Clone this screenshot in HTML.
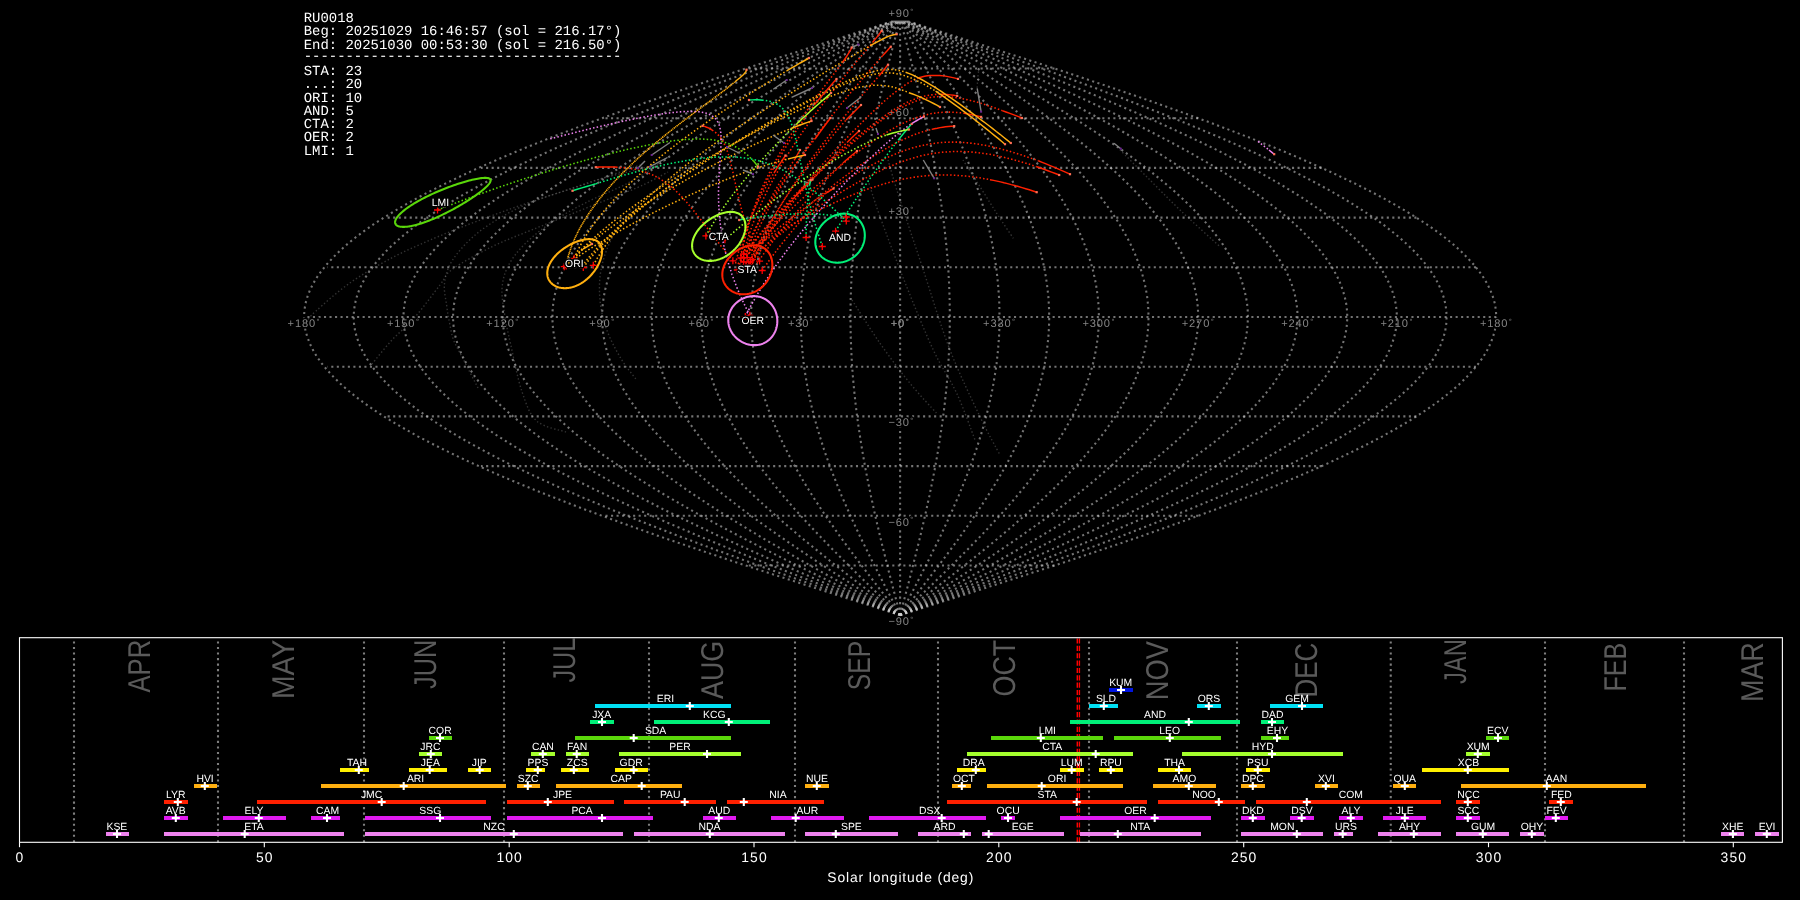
<!DOCTYPE html>
<html><head><meta charset="utf-8"><title>RU0018</title>
<style>html,body{margin:0;padding:0;background:#000;overflow:hidden}svg{display:block;will-change:transform}text{font-family:"Liberation Sans",sans-serif;text-rendering:geometricPrecision}.mono{font-family:"Liberation Mono",monospace}</style></head><body>
<svg width="1800" height="900" viewBox="0 0 1800 900">
<rect width="1800" height="900" fill="#000"/>
<g fill="none" stroke="#d2d2d2" stroke-opacity="0.55" stroke-width="2.08" stroke-dasharray="2.08 3.44">
<path d="M900.1,615.2 L921.0,608.5 L941.7,601.9 L962.5,595.3 L983.1,588.7 L1003.7,582.0 L1024.1,575.4 L1044.4,568.8 L1064.5,562.2 L1084.4,555.5 L1104.0,548.9 L1123.5,542.3 L1142.6,535.7 L1161.5,529.0 L1180.0,522.4 L1198.2,515.8 L1216.1,509.2 L1233.5,502.5 L1250.6,495.9 L1267.2,489.3 L1283.4,482.6 L1299.1,476.0 L1314.3,469.4 L1329.0,462.8 L1343.2,456.1 L1356.8,449.5 L1369.9,442.9 L1382.5,436.3 L1394.4,429.6 L1405.7,423.0 L1416.4,416.4 L1426.5,409.8 L1436.0,403.1 L1444.8,396.5 L1452.9,389.9 L1460.4,383.3 L1467.1,376.6 L1473.2,370.0 L1478.6,363.4 L1483.3,356.8 L1487.3,350.1 L1490.5,343.5 L1493.0,336.9 L1494.9,330.3 L1495.9,323.6 L1496.3,317.0 L1495.9,310.4 L1494.9,303.7 L1493.0,297.1 L1490.5,290.5 L1487.3,283.9 L1483.3,277.2 L1478.6,270.6 L1473.2,264.0 L1467.1,257.4 L1460.4,250.7 L1452.9,244.1 L1444.8,237.5 L1436.0,230.9 L1426.5,224.2 L1416.4,217.6 L1405.7,211.0 L1394.4,204.4 L1382.5,197.7 L1369.9,191.1 L1356.8,184.5 L1343.2,177.9 L1329.0,171.2 L1314.3,164.6 L1299.1,158.0 L1283.4,151.3 L1267.2,144.7 L1250.6,138.1 L1233.5,131.5 L1216.1,124.8 L1198.2,118.2 L1180.0,111.6 L1161.5,105.0 L1142.6,98.3 L1123.5,91.7 L1104.0,85.1 L1084.4,78.5 L1064.5,71.8 L1044.4,65.2 L1024.1,58.6 L1003.7,52.0 L983.1,45.3 L962.5,38.7 L941.7,32.1 L921.0,25.5 L910.6,22.1"/>
<path d="M900.1,615.2 L919.2,608.5 L938.3,601.9 L957.3,595.3 L976.2,588.7 L995.0,582.0 L1013.8,575.4 L1032.4,568.8 L1050.8,562.2 L1069.0,555.5 L1087.1,548.9 L1104.9,542.3 L1122.4,535.7 L1139.7,529.0 L1156.7,522.4 L1173.4,515.8 L1189.7,509.2 L1205.7,502.5 L1221.4,495.9 L1236.6,489.3 L1251.4,482.6 L1265.8,476.0 L1279.8,469.4 L1293.3,462.8 L1306.3,456.1 L1318.8,449.5 L1330.8,442.9 L1342.3,436.3 L1353.2,429.6 L1363.6,423.0 L1373.4,416.4 L1382.7,409.8 L1391.3,403.1 L1399.4,396.5 L1406.8,389.9 L1413.7,383.3 L1419.9,376.6 L1425.5,370.0 L1430.4,363.4 L1434.7,356.8 L1438.3,350.1 L1441.3,343.5 L1443.6,336.9 L1445.3,330.3 L1446.3,323.6 L1446.6,317.0 L1446.3,310.4 L1445.3,303.7 L1443.6,297.1 L1441.3,290.5 L1438.3,283.9 L1434.7,277.2 L1430.4,270.6 L1425.5,264.0 L1419.9,257.4 L1413.7,250.7 L1406.8,244.1 L1399.4,237.5 L1391.3,230.9 L1382.7,224.2 L1373.4,217.6 L1363.6,211.0 L1353.2,204.4 L1342.3,197.7 L1330.8,191.1 L1318.8,184.5 L1306.3,177.9 L1293.3,171.2 L1279.8,164.6 L1265.8,158.0 L1251.4,151.3 L1236.6,144.7 L1221.4,138.1 L1205.7,131.5 L1189.7,124.8 L1173.4,118.2 L1156.7,111.6 L1139.7,105.0 L1122.4,98.3 L1104.9,91.7 L1087.1,85.1 L1069.0,78.5 L1050.8,71.8 L1032.4,65.2 L1013.8,58.6 L995.0,52.0 L976.2,45.3 L957.3,38.7 L938.3,32.1 L919.2,25.5 L909.7,22.1"/>
<path d="M900.1,615.2 L917.5,608.5 L934.8,601.9 L952.1,595.3 L969.3,588.7 L986.4,582.0 L1003.4,575.4 L1020.3,568.8 L1037.1,562.2 L1053.7,555.5 L1070.1,548.9 L1086.3,542.3 L1102.2,535.7 L1117.9,529.0 L1133.4,522.4 L1148.5,515.8 L1163.4,509.2 L1178.0,502.5 L1192.2,495.9 L1206.0,489.3 L1219.5,482.6 L1232.6,476.0 L1245.3,469.4 L1257.5,462.8 L1269.3,456.1 L1280.7,449.5 L1291.6,442.9 L1302.1,436.3 L1312.0,429.6 L1321.5,423.0 L1330.4,416.4 L1338.8,409.8 L1346.7,403.1 L1354.0,396.5 L1360.8,389.9 L1367.0,383.3 L1372.6,376.6 L1377.7,370.0 L1382.2,363.4 L1386.1,356.8 L1389.4,350.1 L1392.1,343.5 L1394.2,336.9 L1395.7,330.3 L1396.6,323.6 L1396.9,317.0 L1396.6,310.4 L1395.7,303.7 L1394.2,297.1 L1392.1,290.5 L1389.4,283.9 L1386.1,277.2 L1382.2,270.6 L1377.7,264.0 L1372.6,257.4 L1367.0,250.7 L1360.8,244.1 L1354.0,237.5 L1346.7,230.9 L1338.8,224.2 L1330.4,217.6 L1321.5,211.0 L1312.0,204.4 L1302.1,197.7 L1291.6,191.1 L1280.7,184.5 L1269.3,177.9 L1257.5,171.2 L1245.3,164.6 L1232.6,158.0 L1219.5,151.3 L1206.0,144.7 L1192.2,138.1 L1178.0,131.5 L1163.4,124.8 L1148.5,118.2 L1133.4,111.6 L1117.9,105.0 L1102.2,98.3 L1086.3,91.7 L1070.1,85.1 L1053.7,78.5 L1037.1,71.8 L1020.3,65.2 L1003.4,58.6 L986.4,52.0 L969.3,45.3 L952.1,38.7 L934.8,32.1 L917.5,25.5 L908.8,22.1"/>
<path d="M900.1,615.2 L915.8,608.5 L931.3,601.9 L946.9,595.3 L962.4,588.7 L977.8,582.0 L993.1,575.4 L1008.3,568.8 L1023.4,562.2 L1038.3,555.5 L1053.1,548.9 L1067.6,542.3 L1082.0,535.7 L1096.2,529.0 L1110.1,522.4 L1123.7,515.8 L1137.1,509.2 L1150.2,502.5 L1163.0,495.9 L1175.4,489.3 L1187.6,482.6 L1199.3,476.0 L1210.7,469.4 L1221.8,462.8 L1232.4,456.1 L1242.7,449.5 L1252.5,442.9 L1261.9,436.3 L1270.8,429.6 L1279.3,423.0 L1287.4,416.4 L1294.9,409.8 L1302.0,403.1 L1308.6,396.5 L1314.7,389.9 L1320.3,383.3 L1325.4,376.6 L1329.9,370.0 L1334.0,363.4 L1337.5,356.8 L1340.5,350.1 L1342.9,343.5 L1344.8,336.9 L1346.2,330.3 L1347.0,323.6 L1347.3,317.0 L1347.0,310.4 L1346.2,303.7 L1344.8,297.1 L1342.9,290.5 L1340.5,283.9 L1337.5,277.2 L1334.0,270.6 L1329.9,264.0 L1325.4,257.4 L1320.3,250.7 L1314.7,244.1 L1308.6,237.5 L1302.0,230.9 L1294.9,224.2 L1287.4,217.6 L1279.3,211.0 L1270.8,204.4 L1261.9,197.7 L1252.5,191.1 L1242.7,184.5 L1232.4,177.9 L1221.8,171.2 L1210.7,164.6 L1199.3,158.0 L1187.6,151.3 L1175.4,144.7 L1163.0,138.1 L1150.2,131.5 L1137.1,124.8 L1123.7,118.2 L1110.1,111.6 L1096.2,105.0 L1082.0,98.3 L1067.6,91.7 L1053.1,85.1 L1038.3,78.5 L1023.4,71.8 L1008.3,65.2 L993.1,58.6 L977.8,52.0 L962.4,45.3 L946.9,38.7 L931.3,32.1 L915.8,25.5 L908.0,22.1"/>
<path d="M900.1,615.2 L914.0,608.5 L927.9,601.9 L941.7,595.3 L955.5,588.7 L969.2,582.0 L982.8,575.4 L996.3,568.8 L1009.7,562.2 L1023.0,555.5 L1036.1,548.9 L1049.0,542.3 L1061.8,535.7 L1074.4,529.0 L1086.7,522.4 L1098.9,515.8 L1110.8,509.2 L1122.4,502.5 L1133.8,495.9 L1144.8,489.3 L1155.6,482.6 L1166.1,476.0 L1176.2,469.4 L1186.0,462.8 L1195.5,456.1 L1204.6,449.5 L1213.3,442.9 L1221.7,436.3 L1229.6,429.6 L1237.2,423.0 L1244.3,416.4 L1251.1,409.8 L1257.4,403.1 L1263.2,396.5 L1268.6,389.9 L1273.6,383.3 L1278.1,376.6 L1282.2,370.0 L1285.8,363.4 L1288.9,356.8 L1291.6,350.1 L1293.7,343.5 L1295.4,336.9 L1296.6,330.3 L1297.3,323.6 L1297.6,317.0 L1297.3,310.4 L1296.6,303.7 L1295.4,297.1 L1293.7,290.5 L1291.6,283.9 L1288.9,277.2 L1285.8,270.6 L1282.2,264.0 L1278.1,257.4 L1273.6,250.7 L1268.6,244.1 L1263.2,237.5 L1257.4,230.9 L1251.1,224.2 L1244.3,217.6 L1237.2,211.0 L1229.6,204.4 L1221.7,197.7 L1213.3,191.1 L1204.6,184.5 L1195.5,177.9 L1186.0,171.2 L1176.2,164.6 L1166.1,158.0 L1155.6,151.3 L1144.8,144.7 L1133.8,138.1 L1122.4,131.5 L1110.8,124.8 L1098.9,118.2 L1086.7,111.6 L1074.4,105.0 L1061.8,98.3 L1049.0,91.7 L1036.1,85.1 L1023.0,78.5 L1009.7,71.8 L996.3,65.2 L982.8,58.6 L969.2,52.0 L955.5,45.3 L941.7,38.7 L927.9,32.1 L914.0,25.5 L907.1,22.1"/>
<path d="M900.1,615.2 L912.3,608.5 L924.4,601.9 L936.5,595.3 L948.5,588.7 L960.5,582.0 L972.5,575.4 L984.3,568.8 L996.0,562.2 L1007.6,555.5 L1019.1,548.9 L1030.4,542.3 L1041.6,535.7 L1052.6,529.0 L1063.4,522.4 L1074.0,515.8 L1084.4,509.2 L1094.6,502.5 L1104.6,495.9 L1114.3,489.3 L1123.7,482.6 L1132.8,476.0 L1141.7,469.4 L1150.3,462.8 L1158.6,456.1 L1166.5,449.5 L1174.2,442.9 L1181.5,436.3 L1188.5,429.6 L1195.1,423.0 L1201.3,416.4 L1207.2,409.8 L1212.7,403.1 L1217.8,396.5 L1222.6,389.9 L1226.9,383.3 L1230.9,376.6 L1234.4,370.0 L1237.6,363.4 L1240.3,356.8 L1242.6,350.1 L1244.5,343.5 L1246.0,336.9 L1247.1,330.3 L1247.7,323.6 L1247.9,317.0 L1247.7,310.4 L1247.1,303.7 L1246.0,297.1 L1244.5,290.5 L1242.6,283.9 L1240.3,277.2 L1237.6,270.6 L1234.4,264.0 L1230.9,257.4 L1226.9,250.7 L1222.6,244.1 L1217.8,237.5 L1212.7,230.9 L1207.2,224.2 L1201.3,217.6 L1195.1,211.0 L1188.5,204.4 L1181.5,197.7 L1174.2,191.1 L1166.5,184.5 L1158.6,177.9 L1150.3,171.2 L1141.7,164.6 L1132.8,158.0 L1123.7,151.3 L1114.3,144.7 L1104.6,138.1 L1094.6,131.5 L1084.4,124.8 L1074.0,118.2 L1063.4,111.6 L1052.6,105.0 L1041.6,98.3 L1030.4,91.7 L1019.1,85.1 L1007.6,78.5 L996.0,71.8 L984.3,65.2 L972.5,58.6 L960.5,52.0 L948.5,45.3 L936.5,38.7 L924.4,32.1 L912.3,25.5 L906.2,22.1"/>
<path d="M900.1,615.2 L910.6,608.5 L920.9,601.9 L931.3,595.3 L941.6,588.7 L951.9,582.0 L962.1,575.4 L972.3,568.8 L982.3,562.2 L992.3,555.5 L1002.1,548.9 L1011.8,542.3 L1021.4,535.7 L1030.8,529.0 L1040.1,522.4 L1049.2,515.8 L1058.1,509.2 L1066.8,502.5 L1075.4,495.9 L1083.7,489.3 L1091.8,482.6 L1099.6,476.0 L1107.2,469.4 L1114.6,462.8 L1121.7,456.1 L1128.5,449.5 L1135.0,442.9 L1141.3,436.3 L1147.3,429.6 L1152.9,423.0 L1158.3,416.4 L1163.3,409.8 L1168.1,403.1 L1172.5,396.5 L1176.5,389.9 L1180.3,383.3 L1183.6,376.6 L1186.7,370.0 L1189.4,363.4 L1191.7,356.8 L1193.7,350.1 L1195.3,343.5 L1196.6,336.9 L1197.5,330.3 L1198.0,323.6 L1198.2,317.0 L1198.0,310.4 L1197.5,303.7 L1196.6,297.1 L1195.3,290.5 L1193.7,283.9 L1191.7,277.2 L1189.4,270.6 L1186.7,264.0 L1183.6,257.4 L1180.3,250.7 L1176.5,244.1 L1172.5,237.5 L1168.1,230.9 L1163.3,224.2 L1158.3,217.6 L1152.9,211.0 L1147.3,204.4 L1141.3,197.7 L1135.0,191.1 L1128.5,184.5 L1121.7,177.9 L1114.6,171.2 L1107.2,164.6 L1099.6,158.0 L1091.8,151.3 L1083.7,144.7 L1075.4,138.1 L1066.8,131.5 L1058.1,124.8 L1049.2,118.2 L1040.1,111.6 L1030.8,105.0 L1021.4,98.3 L1011.8,91.7 L1002.1,85.1 L992.3,78.5 L982.3,71.8 L972.3,65.2 L962.1,58.6 L951.9,52.0 L941.6,45.3 L931.3,38.7 L920.9,32.1 L910.6,25.5 L905.4,22.1"/>
<path d="M900.1,615.2 L908.8,608.5 L917.5,601.9 L926.1,595.3 L934.7,588.7 L943.3,582.0 L951.8,575.4 L960.2,568.8 L968.6,562.2 L976.9,555.5 L985.1,548.9 L993.2,542.3 L1001.2,535.7 L1009.0,529.0 L1016.8,522.4 L1024.3,515.8 L1031.8,509.2 L1039.1,502.5 L1046.2,495.9 L1053.1,489.3 L1059.8,482.6 L1066.4,476.0 L1072.7,469.4 L1078.8,462.8 L1084.7,456.1 L1090.4,449.5 L1095.9,442.9 L1101.1,436.3 L1106.1,429.6 L1110.8,423.0 L1115.3,416.4 L1119.5,409.8 L1123.4,403.1 L1127.1,396.5 L1130.5,389.9 L1133.6,383.3 L1136.4,376.6 L1138.9,370.0 L1141.2,363.4 L1143.1,356.8 L1144.8,350.1 L1146.1,343.5 L1147.2,336.9 L1147.9,330.3 L1148.4,323.6 L1148.5,317.0 L1148.4,310.4 L1147.9,303.7 L1147.2,297.1 L1146.1,290.5 L1144.8,283.9 L1143.1,277.2 L1141.2,270.6 L1138.9,264.0 L1136.4,257.4 L1133.6,250.7 L1130.5,244.1 L1127.1,237.5 L1123.4,230.9 L1119.5,224.2 L1115.3,217.6 L1110.8,211.0 L1106.1,204.4 L1101.1,197.7 L1095.9,191.1 L1090.4,184.5 L1084.7,177.9 L1078.8,171.2 L1072.7,164.6 L1066.4,158.0 L1059.8,151.3 L1053.1,144.7 L1046.2,138.1 L1039.1,131.5 L1031.8,124.8 L1024.3,118.2 L1016.8,111.6 L1009.0,105.0 L1001.2,98.3 L993.2,91.7 L985.1,85.1 L976.9,78.5 L968.6,71.8 L960.2,65.2 L951.8,58.6 L943.3,52.0 L934.7,45.3 L926.1,38.7 L917.5,32.1 L908.8,25.5 L904.5,22.1"/>
<path d="M900.1,615.2 L907.1,608.5 L914.0,601.9 L920.9,595.3 L927.8,588.7 L934.7,582.0 L941.5,575.4 L948.2,568.8 L954.9,562.2 L961.6,555.5 L968.1,548.9 L974.6,542.3 L981.0,535.7 L987.3,529.0 L993.4,522.4 L999.5,515.8 L1005.5,509.2 L1011.3,502.5 L1017.0,495.9 L1022.5,489.3 L1027.9,482.6 L1033.1,476.0 L1038.2,469.4 L1043.1,462.8 L1047.8,456.1 L1052.4,449.5 L1056.7,442.9 L1060.9,436.3 L1064.9,429.6 L1068.7,423.0 L1072.2,416.4 L1075.6,409.8 L1078.8,403.1 L1081.7,396.5 L1084.4,389.9 L1086.9,383.3 L1089.1,376.6 L1091.2,370.0 L1093.0,363.4 L1094.5,356.8 L1095.9,350.1 L1096.9,343.5 L1097.8,336.9 L1098.4,330.3 L1098.7,323.6 L1098.9,317.0 L1098.7,310.4 L1098.4,303.7 L1097.8,297.1 L1096.9,290.5 L1095.9,283.9 L1094.5,277.2 L1093.0,270.6 L1091.2,264.0 L1089.1,257.4 L1086.9,250.7 L1084.4,244.1 L1081.7,237.5 L1078.8,230.9 L1075.6,224.2 L1072.2,217.6 L1068.7,211.0 L1064.9,204.4 L1060.9,197.7 L1056.7,191.1 L1052.4,184.5 L1047.8,177.9 L1043.1,171.2 L1038.2,164.6 L1033.1,158.0 L1027.9,151.3 L1022.5,144.7 L1017.0,138.1 L1011.3,131.5 L1005.5,124.8 L999.5,118.2 L993.4,111.6 L987.3,105.0 L981.0,98.3 L974.6,91.7 L968.1,85.1 L961.6,78.5 L954.9,71.8 L948.2,65.2 L941.5,58.6 L934.7,52.0 L927.8,45.3 L920.9,38.7 L914.0,32.1 L907.1,25.5 L903.6,22.1"/>
<path d="M900.1,615.2 L905.4,608.5 L910.5,601.9 L915.7,595.3 L920.9,588.7 L926.0,582.0 L931.1,575.4 L936.2,568.8 L941.2,562.2 L946.2,555.5 L951.1,548.9 L956.0,542.3 L960.8,535.7 L965.5,529.0 L970.1,522.4 L974.7,515.8 L979.1,509.2 L983.5,502.5 L987.8,495.9 L991.9,489.3 L996.0,482.6 L999.9,476.0 L1003.7,469.4 L1007.4,462.8 L1010.9,456.1 L1014.3,449.5 L1017.6,442.9 L1020.7,436.3 L1023.7,429.6 L1026.5,423.0 L1029.2,416.4 L1031.7,409.8 L1034.1,403.1 L1036.3,396.5 L1038.3,389.9 L1040.2,383.3 L1041.9,376.6 L1043.4,370.0 L1044.8,363.4 L1045.9,356.8 L1046.9,350.1 L1047.7,343.5 L1048.4,336.9 L1048.8,330.3 L1049.1,323.6 L1049.2,317.0 L1049.1,310.4 L1048.8,303.7 L1048.4,297.1 L1047.7,290.5 L1046.9,283.9 L1045.9,277.2 L1044.8,270.6 L1043.4,264.0 L1041.9,257.4 L1040.2,250.7 L1038.3,244.1 L1036.3,237.5 L1034.1,230.9 L1031.7,224.2 L1029.2,217.6 L1026.5,211.0 L1023.7,204.4 L1020.7,197.7 L1017.6,191.1 L1014.3,184.5 L1010.9,177.9 L1007.4,171.2 L1003.7,164.6 L999.9,158.0 L996.0,151.3 L991.9,144.7 L987.8,138.1 L983.5,131.5 L979.1,124.8 L974.7,118.2 L970.1,111.6 L965.5,105.0 L960.8,98.3 L956.0,91.7 L951.1,85.1 L946.2,78.5 L941.2,71.8 L936.2,65.2 L931.1,58.6 L926.0,52.0 L920.9,45.3 L915.7,38.7 L910.5,32.1 L905.4,25.5 L902.8,22.1"/>
<path d="M900.1,615.2 L903.6,608.5 L907.1,601.9 L910.5,595.3 L914.0,588.7 L917.4,582.0 L920.8,575.4 L924.2,568.8 L927.5,562.2 L930.9,555.5 L934.1,548.9 L937.4,542.3 L940.6,535.7 L943.7,529.0 L946.8,522.4 L949.8,515.8 L952.8,509.2 L955.7,502.5 L958.6,495.9 L961.3,489.3 L964.0,482.6 L966.6,476.0 L969.2,469.4 L971.6,462.8 L974.0,456.1 L976.3,449.5 L978.4,442.9 L980.5,436.3 L982.5,429.6 L984.4,423.0 L986.2,416.4 L987.9,409.8 L989.5,403.1 L990.9,396.5 L992.3,389.9 L993.5,383.3 L994.6,376.6 L995.7,370.0 L996.6,363.4 L997.3,356.8 L998.0,350.1 L998.5,343.5 L999.0,336.9 L999.3,330.3 L999.4,323.6 L999.5,317.0 L999.4,310.4 L999.3,303.7 L999.0,297.1 L998.5,290.5 L998.0,283.9 L997.3,277.2 L996.6,270.6 L995.7,264.0 L994.6,257.4 L993.5,250.7 L992.3,244.1 L990.9,237.5 L989.5,230.9 L987.9,224.2 L986.2,217.6 L984.4,211.0 L982.5,204.4 L980.5,197.7 L978.4,191.1 L976.3,184.5 L974.0,177.9 L971.6,171.2 L969.2,164.6 L966.6,158.0 L964.0,151.3 L961.3,144.7 L958.6,138.1 L955.7,131.5 L952.8,124.8 L949.8,118.2 L946.8,111.6 L943.7,105.0 L940.6,98.3 L937.4,91.7 L934.1,85.1 L930.9,78.5 L927.5,71.8 L924.2,65.2 L920.8,58.6 L917.4,52.0 L914.0,45.3 L910.5,38.7 L907.1,32.1 L903.6,25.5 L901.9,22.1"/>
<path d="M900.1,615.2 L901.9,608.5 L903.6,601.9 L905.3,595.3 L907.1,588.7 L908.8,582.0 L910.5,575.4 L912.2,568.8 L913.8,562.2 L915.5,555.5 L917.1,548.9 L918.8,542.3 L920.4,535.7 L921.9,529.0 L923.5,522.4 L925.0,515.8 L926.5,509.2 L927.9,502.5 L929.4,495.9 L930.7,489.3 L932.1,482.6 L933.4,476.0 L934.7,469.4 L935.9,462.8 L937.1,456.1 L938.2,449.5 L939.3,442.9 L940.3,436.3 L941.3,429.6 L942.3,423.0 L943.2,416.4 L944.0,409.8 L944.8,403.1 L945.5,396.5 L946.2,389.9 L946.8,383.3 L947.4,376.6 L947.9,370.0 L948.4,363.4 L948.7,356.8 L949.1,350.1 L949.3,343.5 L949.6,336.9 L949.7,330.3 L949.8,323.6 L949.8,317.0 L949.8,310.4 L949.7,303.7 L949.6,297.1 L949.3,290.5 L949.1,283.9 L948.7,277.2 L948.4,270.6 L947.9,264.0 L947.4,257.4 L946.8,250.7 L946.2,244.1 L945.5,237.5 L944.8,230.9 L944.0,224.2 L943.2,217.6 L942.3,211.0 L941.3,204.4 L940.3,197.7 L939.3,191.1 L938.2,184.5 L937.1,177.9 L935.9,171.2 L934.7,164.6 L933.4,158.0 L932.1,151.3 L930.7,144.7 L929.4,138.1 L927.9,131.5 L926.5,124.8 L925.0,118.2 L923.5,111.6 L921.9,105.0 L920.4,98.3 L918.8,91.7 L917.1,85.1 L915.5,78.5 L913.8,71.8 L912.2,65.2 L910.5,58.6 L908.8,52.0 L907.1,45.3 L905.3,38.7 L903.6,32.1 L901.9,25.5 L901.0,22.1"/>
<path d="M900.1,615.2 L900.1,608.5 L900.1,601.9 L900.1,595.3 L900.1,588.7 L900.1,582.0 L900.1,575.4 L900.1,568.8 L900.1,562.2 L900.1,555.5 L900.1,548.9 L900.1,542.3 L900.1,535.7 L900.1,529.0 L900.1,522.4 L900.1,515.8 L900.1,509.2 L900.1,502.5 L900.1,495.9 L900.1,489.3 L900.1,482.6 L900.1,476.0 L900.1,469.4 L900.1,462.8 L900.1,456.1 L900.1,449.5 L900.1,442.9 L900.1,436.3 L900.1,429.6 L900.1,423.0 L900.1,416.4 L900.1,409.8 L900.1,403.1 L900.1,396.5 L900.1,389.9 L900.1,383.3 L900.1,376.6 L900.1,370.0 L900.1,363.4 L900.1,356.8 L900.1,350.1 L900.1,343.5 L900.1,336.9 L900.1,330.3 L900.1,323.6 L900.1,317.0 L900.1,310.4 L900.1,303.7 L900.1,297.1 L900.1,290.5 L900.1,283.9 L900.1,277.2 L900.1,270.6 L900.1,264.0 L900.1,257.4 L900.1,250.7 L900.1,244.1 L900.1,237.5 L900.1,230.9 L900.1,224.2 L900.1,217.6 L900.1,211.0 L900.1,204.4 L900.1,197.7 L900.1,191.1 L900.1,184.5 L900.1,177.9 L900.1,171.2 L900.1,164.6 L900.1,158.0 L900.1,151.3 L900.1,144.7 L900.1,138.1 L900.1,131.5 L900.1,124.8 L900.1,118.2 L900.1,111.6 L900.1,105.0 L900.1,98.3 L900.1,91.7 L900.1,85.1 L900.1,78.5 L900.1,71.8 L900.1,65.2 L900.1,58.6 L900.1,52.0 L900.1,45.3 L900.1,38.7 L900.1,32.1 L900.1,25.5 L900.1,22.1"/>
<path d="M900.1,615.2 L898.4,608.5 L896.7,601.9 L895.0,595.3 L893.2,588.7 L891.5,582.0 L889.8,575.4 L888.1,568.8 L886.5,562.2 L884.8,555.5 L883.2,548.9 L881.5,542.3 L879.9,535.7 L878.4,529.0 L876.8,522.4 L875.3,515.8 L873.8,509.2 L872.4,502.5 L870.9,495.9 L869.6,489.3 L868.2,482.6 L866.9,476.0 L865.6,469.4 L864.4,462.8 L863.2,456.1 L862.1,449.5 L861.0,442.9 L860.0,436.3 L859.0,429.6 L858.0,423.0 L857.1,416.4 L856.3,409.8 L855.5,403.1 L854.8,396.5 L854.1,389.9 L853.5,383.3 L852.9,376.6 L852.4,370.0 L851.9,363.4 L851.6,356.8 L851.2,350.1 L851.0,343.5 L850.7,336.9 L850.6,330.3 L850.5,323.6 L850.5,317.0 L850.5,310.4 L850.6,303.7 L850.7,297.1 L851.0,290.5 L851.2,283.9 L851.6,277.2 L851.9,270.6 L852.4,264.0 L852.9,257.4 L853.5,250.7 L854.1,244.1 L854.8,237.5 L855.5,230.9 L856.3,224.2 L857.1,217.6 L858.0,211.0 L859.0,204.4 L860.0,197.7 L861.0,191.1 L862.1,184.5 L863.2,177.9 L864.4,171.2 L865.6,164.6 L866.9,158.0 L868.2,151.3 L869.6,144.7 L870.9,138.1 L872.4,131.5 L873.8,124.8 L875.3,118.2 L876.8,111.6 L878.4,105.0 L879.9,98.3 L881.5,91.7 L883.2,85.1 L884.8,78.5 L886.5,71.8 L888.1,65.2 L889.8,58.6 L891.5,52.0 L893.2,45.3 L895.0,38.7 L896.7,32.1 L898.4,25.5 L899.3,22.1"/>
<path d="M900.1,615.2 L896.7,608.5 L893.2,601.9 L889.8,595.3 L886.3,588.7 L882.9,582.0 L879.5,575.4 L876.1,568.8 L872.8,562.2 L869.4,555.5 L866.2,548.9 L862.9,542.3 L859.7,535.7 L856.6,529.0 L853.5,522.4 L850.5,515.8 L847.5,509.2 L844.6,502.5 L841.7,495.9 L839.0,489.3 L836.3,482.6 L833.7,476.0 L831.1,469.4 L828.7,462.8 L826.3,456.1 L824.0,449.5 L821.9,442.9 L819.8,436.3 L817.8,429.6 L815.9,423.0 L814.1,416.4 L812.4,409.8 L810.8,403.1 L809.4,396.5 L808.0,389.9 L806.8,383.3 L805.7,376.6 L804.6,370.0 L803.7,363.4 L803.0,356.8 L802.3,350.1 L801.8,343.5 L801.3,336.9 L801.0,330.3 L800.9,323.6 L800.8,317.0 L800.9,310.4 L801.0,303.7 L801.3,297.1 L801.8,290.5 L802.3,283.9 L803.0,277.2 L803.7,270.6 L804.6,264.0 L805.7,257.4 L806.8,250.7 L808.0,244.1 L809.4,237.5 L810.8,230.9 L812.4,224.2 L814.1,217.6 L815.9,211.0 L817.8,204.4 L819.8,197.7 L821.9,191.1 L824.0,184.5 L826.3,177.9 L828.7,171.2 L831.1,164.6 L833.7,158.0 L836.3,151.3 L839.0,144.7 L841.7,138.1 L844.6,131.5 L847.5,124.8 L850.5,118.2 L853.5,111.6 L856.6,105.0 L859.7,98.3 L862.9,91.7 L866.2,85.1 L869.4,78.5 L872.8,71.8 L876.1,65.2 L879.5,58.6 L882.9,52.0 L886.3,45.3 L889.8,38.7 L893.2,32.1 L896.7,25.5 L898.4,22.1"/>
<path d="M900.1,615.2 L894.9,608.5 L889.8,601.9 L884.6,595.3 L879.4,588.7 L874.3,582.0 L869.2,575.4 L864.1,568.8 L859.1,562.2 L854.1,555.5 L849.2,548.9 L844.3,542.3 L839.5,535.7 L834.8,529.0 L830.2,522.4 L825.6,515.8 L821.2,509.2 L816.8,502.5 L812.5,495.9 L808.4,489.3 L804.3,482.6 L800.4,476.0 L796.6,469.4 L792.9,462.8 L789.4,456.1 L786.0,449.5 L782.7,442.9 L779.6,436.3 L776.6,429.6 L773.8,423.0 L771.1,416.4 L768.6,409.8 L766.2,403.1 L764.0,396.5 L762.0,389.9 L760.1,383.3 L758.4,376.6 L756.9,370.0 L755.5,363.4 L754.4,356.8 L753.4,350.1 L752.6,343.5 L751.9,336.9 L751.5,330.3 L751.2,323.6 L751.1,317.0 L751.2,310.4 L751.5,303.7 L751.9,297.1 L752.6,290.5 L753.4,283.9 L754.4,277.2 L755.5,270.6 L756.9,264.0 L758.4,257.4 L760.1,250.7 L762.0,244.1 L764.0,237.5 L766.2,230.9 L768.6,224.2 L771.1,217.6 L773.8,211.0 L776.6,204.4 L779.6,197.7 L782.7,191.1 L786.0,184.5 L789.4,177.9 L792.9,171.2 L796.6,164.6 L800.4,158.0 L804.3,151.3 L808.4,144.7 L812.5,138.1 L816.8,131.5 L821.2,124.8 L825.6,118.2 L830.2,111.6 L834.8,105.0 L839.5,98.3 L844.3,91.7 L849.2,85.1 L854.1,78.5 L859.1,71.8 L864.1,65.2 L869.2,58.6 L874.3,52.0 L879.4,45.3 L884.6,38.7 L889.8,32.1 L894.9,25.5 L897.5,22.1"/>
<path d="M900.1,615.2 L893.2,608.5 L886.3,601.9 L879.4,595.3 L872.5,588.7 L865.6,582.0 L858.8,575.4 L852.1,568.8 L845.4,562.2 L838.7,555.5 L832.2,548.9 L825.7,542.3 L819.3,535.7 L813.0,529.0 L806.9,522.4 L800.8,515.8 L794.8,509.2 L789.0,502.5 L783.3,495.9 L777.8,489.3 L772.4,482.6 L767.2,476.0 L762.1,469.4 L757.2,462.8 L752.5,456.1 L747.9,449.5 L743.6,442.9 L739.4,436.3 L735.4,429.6 L731.6,423.0 L728.1,416.4 L724.7,409.8 L721.5,403.1 L718.6,396.5 L715.9,389.9 L713.4,383.3 L711.2,376.6 L709.1,370.0 L707.3,363.4 L705.8,356.8 L704.4,350.1 L703.4,343.5 L702.5,336.9 L701.9,330.3 L701.6,323.6 L701.4,317.0 L701.6,310.4 L701.9,303.7 L702.5,297.1 L703.4,290.5 L704.4,283.9 L705.8,277.2 L707.3,270.6 L709.1,264.0 L711.2,257.4 L713.4,250.7 L715.9,244.1 L718.6,237.5 L721.5,230.9 L724.7,224.2 L728.1,217.6 L731.6,211.0 L735.4,204.4 L739.4,197.7 L743.6,191.1 L747.9,184.5 L752.5,177.9 L757.2,171.2 L762.1,164.6 L767.2,158.0 L772.4,151.3 L777.8,144.7 L783.3,138.1 L789.0,131.5 L794.8,124.8 L800.8,118.2 L806.9,111.6 L813.0,105.0 L819.3,98.3 L825.7,91.7 L832.2,85.1 L838.7,78.5 L845.4,71.8 L852.1,65.2 L858.8,58.6 L865.6,52.0 L872.5,45.3 L879.4,38.7 L886.3,32.1 L893.2,25.5 L896.7,22.1"/>
<path d="M900.1,615.2 L891.5,608.5 L882.8,601.9 L874.2,595.3 L865.6,588.7 L857.0,582.0 L848.5,575.4 L840.1,568.8 L831.7,562.2 L823.4,555.5 L815.2,548.9 L807.1,542.3 L799.1,535.7 L791.3,529.0 L783.5,522.4 L775.9,515.8 L768.5,509.2 L761.2,502.5 L754.1,495.9 L747.2,489.3 L740.5,482.6 L733.9,476.0 L727.6,469.4 L721.5,462.8 L715.6,456.1 L709.9,449.5 L704.4,442.9 L699.2,436.3 L694.2,429.6 L689.5,423.0 L685.0,416.4 L680.8,409.8 L676.9,403.1 L673.2,396.5 L669.8,389.9 L666.7,383.3 L663.9,376.6 L661.4,370.0 L659.1,363.4 L657.2,356.8 L655.5,350.1 L654.2,343.5 L653.1,336.9 L652.4,330.3 L651.9,323.6 L651.8,317.0 L651.9,310.4 L652.4,303.7 L653.1,297.1 L654.2,290.5 L655.5,283.9 L657.2,277.2 L659.1,270.6 L661.4,264.0 L663.9,257.4 L666.7,250.7 L669.8,244.1 L673.2,237.5 L676.9,230.9 L680.8,224.2 L685.0,217.6 L689.5,211.0 L694.2,204.4 L699.2,197.7 L704.4,191.1 L709.9,184.5 L715.6,177.9 L721.5,171.2 L727.6,164.6 L733.9,158.0 L740.5,151.3 L747.2,144.7 L754.1,138.1 L761.2,131.5 L768.5,124.8 L775.9,118.2 L783.5,111.6 L791.3,105.0 L799.1,98.3 L807.1,91.7 L815.2,85.1 L823.4,78.5 L831.7,71.8 L840.1,65.2 L848.5,58.6 L857.0,52.0 L865.6,45.3 L874.2,38.7 L882.8,32.1 L891.5,25.5 L895.8,22.1"/>
<path d="M900.1,615.2 L889.7,608.5 L879.4,601.9 L869.0,595.3 L858.7,588.7 L848.4,582.0 L838.2,575.4 L828.0,568.8 L818.0,562.2 L808.0,555.5 L798.2,548.9 L788.5,542.3 L778.9,535.7 L769.5,529.0 L760.2,522.4 L751.1,515.8 L742.2,509.2 L733.5,502.5 L724.9,495.9 L716.6,489.3 L708.5,482.6 L700.7,476.0 L693.1,469.4 L685.7,462.8 L678.6,456.1 L671.8,449.5 L665.3,442.9 L659.0,436.3 L653.0,429.6 L647.4,423.0 L642.0,416.4 L637.0,409.8 L632.2,403.1 L627.8,396.5 L623.8,389.9 L620.0,383.3 L616.7,376.6 L613.6,370.0 L610.9,363.4 L608.6,356.8 L606.6,350.1 L605.0,343.5 L603.7,336.9 L602.8,330.3 L602.3,323.6 L602.1,317.0 L602.3,310.4 L602.8,303.7 L603.7,297.1 L605.0,290.5 L606.6,283.9 L608.6,277.2 L610.9,270.6 L613.6,264.0 L616.7,257.4 L620.0,250.7 L623.8,244.1 L627.8,237.5 L632.2,230.9 L637.0,224.2 L642.0,217.6 L647.4,211.0 L653.0,204.4 L659.0,197.7 L665.3,191.1 L671.8,184.5 L678.6,177.9 L685.7,171.2 L693.1,164.6 L700.7,158.0 L708.5,151.3 L716.6,144.7 L724.9,138.1 L733.5,131.5 L742.2,124.8 L751.1,118.2 L760.2,111.6 L769.5,105.0 L778.9,98.3 L788.5,91.7 L798.2,85.1 L808.0,78.5 L818.0,71.8 L828.0,65.2 L838.2,58.6 L848.4,52.0 L858.7,45.3 L869.0,38.7 L879.4,32.1 L889.7,25.5 L894.9,22.1"/>
<path d="M900.1,615.2 L888.0,608.5 L875.9,601.9 L863.8,595.3 L851.8,588.7 L839.8,582.0 L827.8,575.4 L816.0,568.8 L804.3,562.2 L792.7,555.5 L781.2,548.9 L769.9,542.3 L758.7,535.7 L747.7,529.0 L736.9,522.4 L726.3,515.8 L715.9,509.2 L705.7,502.5 L695.7,495.9 L686.0,489.3 L676.6,482.6 L667.5,476.0 L658.6,469.4 L650.0,462.8 L641.7,456.1 L633.8,449.5 L626.1,442.9 L618.8,436.3 L611.8,429.6 L605.2,423.0 L599.0,416.4 L593.1,409.8 L587.6,403.1 L582.5,396.5 L577.7,389.9 L573.4,383.3 L569.4,376.6 L565.9,370.0 L562.7,363.4 L560.0,356.8 L557.7,350.1 L555.8,343.5 L554.3,336.9 L553.2,330.3 L552.6,323.6 L552.4,317.0 L552.6,310.4 L553.2,303.7 L554.3,297.1 L555.8,290.5 L557.7,283.9 L560.0,277.2 L562.7,270.6 L565.9,264.0 L569.4,257.4 L573.4,250.7 L577.7,244.1 L582.5,237.5 L587.6,230.9 L593.1,224.2 L599.0,217.6 L605.2,211.0 L611.8,204.4 L618.8,197.7 L626.1,191.1 L633.8,184.5 L641.7,177.9 L650.0,171.2 L658.6,164.6 L667.5,158.0 L676.6,151.3 L686.0,144.7 L695.7,138.1 L705.7,131.5 L715.9,124.8 L726.3,118.2 L736.9,111.6 L747.7,105.0 L758.7,98.3 L769.9,91.7 L781.2,85.1 L792.7,78.5 L804.3,71.8 L816.0,65.2 L827.8,58.6 L839.8,52.0 L851.8,45.3 L863.8,38.7 L875.9,32.1 L888.0,25.5 L894.1,22.1"/>
<path d="M900.1,615.2 L886.3,608.5 L872.4,601.9 L858.6,595.3 L844.8,588.7 L831.1,582.0 L817.5,575.4 L804.0,568.8 L790.6,562.2 L777.3,555.5 L764.2,548.9 L751.3,542.3 L738.5,535.7 L725.9,529.0 L713.6,522.4 L701.4,515.8 L689.5,509.2 L677.9,502.5 L666.5,495.9 L655.5,489.3 L644.7,482.6 L634.2,476.0 L624.1,469.4 L614.3,462.8 L604.8,456.1 L595.7,449.5 L587.0,442.9 L578.6,436.3 L570.7,429.6 L563.1,423.0 L556.0,416.4 L549.2,409.8 L542.9,403.1 L537.1,396.5 L531.7,389.9 L526.7,383.3 L522.2,376.6 L518.1,370.0 L514.5,363.4 L511.4,356.8 L508.7,350.1 L506.6,343.5 L504.9,336.9 L503.7,330.3 L503.0,323.6 L502.7,317.0 L503.0,310.4 L503.7,303.7 L504.9,297.1 L506.6,290.5 L508.7,283.9 L511.4,277.2 L514.5,270.6 L518.1,264.0 L522.2,257.4 L526.7,250.7 L531.7,244.1 L537.1,237.5 L542.9,230.9 L549.2,224.2 L556.0,217.6 L563.1,211.0 L570.7,204.4 L578.6,197.7 L587.0,191.1 L595.7,184.5 L604.8,177.9 L614.3,171.2 L624.1,164.6 L634.2,158.0 L644.7,151.3 L655.5,144.7 L666.5,138.1 L677.9,131.5 L689.5,124.8 L701.4,118.2 L713.6,111.6 L725.9,105.0 L738.5,98.3 L751.3,91.7 L764.2,85.1 L777.3,78.5 L790.6,71.8 L804.0,65.2 L817.5,58.6 L831.1,52.0 L844.8,45.3 L858.6,38.7 L872.4,32.1 L886.3,25.5 L893.2,22.1"/>
<path d="M900.1,615.2 L884.5,608.5 L869.0,601.9 L853.4,595.3 L837.9,588.7 L822.5,582.0 L807.2,575.4 L792.0,568.8 L776.9,562.2 L762.0,555.5 L747.2,548.9 L732.7,542.3 L718.3,535.7 L704.1,529.0 L690.2,522.4 L676.6,515.8 L663.2,509.2 L650.1,502.5 L637.3,495.9 L624.9,489.3 L612.7,482.6 L601.0,476.0 L589.6,469.4 L578.5,462.8 L567.9,456.1 L557.6,449.5 L547.8,442.9 L538.4,436.3 L529.5,429.6 L521.0,423.0 L512.9,416.4 L505.4,409.8 L498.3,403.1 L491.7,396.5 L485.6,389.9 L480.0,383.3 L474.9,376.6 L470.4,370.0 L466.3,363.4 L462.8,356.8 L459.8,350.1 L457.4,343.5 L455.5,336.9 L454.1,330.3 L453.3,323.6 L453.0,317.0 L453.3,310.4 L454.1,303.7 L455.5,297.1 L457.4,290.5 L459.8,283.9 L462.8,277.2 L466.3,270.6 L470.4,264.0 L474.9,257.4 L480.0,250.7 L485.6,244.1 L491.7,237.5 L498.3,230.9 L505.4,224.2 L512.9,217.6 L521.0,211.0 L529.5,204.4 L538.4,197.7 L547.8,191.1 L557.6,184.5 L567.9,177.9 L578.5,171.2 L589.6,164.6 L601.0,158.0 L612.7,151.3 L624.9,144.7 L637.3,138.1 L650.1,131.5 L663.2,124.8 L676.6,118.2 L690.2,111.6 L704.1,105.0 L718.3,98.3 L732.7,91.7 L747.2,85.1 L762.0,78.5 L776.9,71.8 L792.0,65.2 L807.2,58.6 L822.5,52.0 L837.9,45.3 L853.4,38.7 L869.0,32.1 L884.5,25.5 L892.3,22.1"/>
<path d="M900.1,615.2 L882.8,608.5 L865.5,601.9 L848.2,595.3 L831.0,588.7 L813.9,582.0 L796.9,575.4 L780.0,568.8 L763.2,562.2 L746.6,555.5 L730.2,548.9 L714.0,542.3 L698.1,535.7 L682.4,529.0 L666.9,522.4 L651.8,515.8 L636.9,509.2 L622.3,502.5 L608.1,495.9 L594.3,489.3 L580.8,482.6 L567.7,476.0 L555.0,469.4 L542.8,462.8 L531.0,456.1 L519.6,449.5 L508.7,442.9 L498.2,436.3 L488.3,429.6 L478.8,423.0 L469.9,416.4 L461.5,409.8 L453.6,403.1 L446.3,396.5 L439.5,389.9 L433.3,383.3 L427.7,376.6 L422.6,370.0 L418.1,363.4 L414.2,356.8 L410.9,350.1 L408.2,343.5 L406.1,336.9 L404.6,330.3 L403.7,323.6 L403.4,317.0 L403.7,310.4 L404.6,303.7 L406.1,297.1 L408.2,290.5 L410.9,283.9 L414.2,277.2 L418.1,270.6 L422.6,264.0 L427.7,257.4 L433.3,250.7 L439.5,244.1 L446.3,237.5 L453.6,230.9 L461.5,224.2 L469.9,217.6 L478.8,211.0 L488.3,204.4 L498.2,197.7 L508.7,191.1 L519.6,184.5 L531.0,177.9 L542.8,171.2 L555.0,164.6 L567.7,158.0 L580.8,151.3 L594.3,144.7 L608.1,138.1 L622.3,131.5 L636.9,124.8 L651.8,118.2 L666.9,111.6 L682.4,105.0 L698.1,98.3 L714.0,91.7 L730.2,85.1 L746.6,78.5 L763.2,71.8 L780.0,65.2 L796.9,58.6 L813.9,52.0 L831.0,45.3 L848.2,38.7 L865.5,32.1 L882.8,25.5 L891.5,22.1"/>
<path d="M900.1,615.2 L881.1,608.5 L862.0,601.9 L843.0,595.3 L824.1,588.7 L805.3,582.0 L786.5,575.4 L767.9,568.8 L749.5,562.2 L731.3,555.5 L713.2,548.9 L695.4,542.3 L677.9,535.7 L660.6,529.0 L643.6,522.4 L626.9,515.8 L610.6,509.2 L594.6,502.5 L578.9,495.9 L563.7,489.3 L548.9,482.6 L534.5,476.0 L520.5,469.4 L507.0,462.8 L494.0,456.1 L481.5,449.5 L469.5,442.9 L458.0,436.3 L447.1,429.6 L436.7,423.0 L426.9,416.4 L417.6,409.8 L409.0,403.1 L400.9,396.5 L393.5,389.9 L386.6,383.3 L380.4,376.6 L374.8,370.0 L369.9,363.4 L365.6,356.8 L362.0,350.1 L359.0,343.5 L356.7,336.9 L355.0,330.3 L354.0,323.6 L353.7,317.0 L354.0,310.4 L355.0,303.7 L356.7,297.1 L359.0,290.5 L362.0,283.9 L365.6,277.2 L369.9,270.6 L374.8,264.0 L380.4,257.4 L386.6,250.7 L393.5,244.1 L400.9,237.5 L409.0,230.9 L417.6,224.2 L426.9,217.6 L436.7,211.0 L447.1,204.4 L458.0,197.7 L469.5,191.1 L481.5,184.5 L494.0,177.9 L507.0,171.2 L520.5,164.6 L534.5,158.0 L548.9,151.3 L563.7,144.7 L578.9,138.1 L594.6,131.5 L610.6,124.8 L626.9,118.2 L643.6,111.6 L660.6,105.0 L677.9,98.3 L695.4,91.7 L713.2,85.1 L731.3,78.5 L749.5,71.8 L767.9,65.2 L786.5,58.6 L805.3,52.0 L824.1,45.3 L843.0,38.7 L862.0,32.1 L881.1,25.5 L890.6,22.1"/>
<path d="M900.1,615.2 L879.3,608.5 L858.6,601.9 L837.8,595.3 L817.2,588.7 L796.6,582.0 L776.2,575.4 L755.9,568.8 L735.8,562.2 L715.9,555.5 L696.3,548.9 L676.8,542.3 L657.7,535.7 L638.8,529.0 L620.3,522.4 L602.1,515.8 L584.2,509.2 L566.8,502.5 L549.7,495.9 L533.1,489.3 L516.9,482.6 L501.2,476.0 L486.0,469.4 L471.3,462.8 L457.1,456.1 L443.5,449.5 L430.4,442.9 L417.8,436.3 L405.9,429.6 L394.6,423.0 L383.9,416.4 L373.8,409.8 L364.3,403.1 L355.5,396.5 L347.4,389.9 L339.9,383.3 L333.2,376.6 L327.1,370.0 L321.7,363.4 L317.0,356.8 L313.0,350.1 L309.8,343.5 L307.3,336.9 L305.4,330.3 L304.4,323.6 L304.0,317.0 L304.4,310.4 L305.4,303.7 L307.3,297.1 L309.8,290.5 L313.0,283.9 L317.0,277.2 L321.7,270.6 L327.1,264.0 L333.2,257.4 L339.9,250.7 L347.4,244.1 L355.5,237.5 L364.3,230.9 L373.8,224.2 L383.9,217.6 L394.6,211.0 L405.9,204.4 L417.8,197.7 L430.4,191.1 L443.5,184.5 L457.1,177.9 L471.3,171.2 L486.0,164.6 L501.2,158.0 L516.9,151.3 L533.1,144.7 L549.7,138.1 L566.8,131.5 L584.2,124.8 L602.1,118.2 L620.3,111.6 L638.8,105.0 L657.7,98.3 L676.8,91.7 L696.3,85.1 L715.9,78.5 L735.8,71.8 L755.9,65.2 L776.2,58.6 L796.6,52.0 L817.2,45.3 L837.8,38.7 L858.6,32.1 L879.3,25.5 L889.7,22.1"/>
<path d="M1054.45,565.48 L746.71,565.48"/>
<path d="M1198.23,515.78 L603.73,515.78"/>
<path d="M1321.70,466.09 L480.94,466.09"/>
<path d="M1416.44,416.39 L386.73,416.39"/>
<path d="M1476.00,366.69 L327.50,366.69"/>
<path d="M1496.31,317.00 L307.30,317.00"/>
<path d="M1476.00,267.31 L327.50,267.31"/>
<path d="M1416.44,217.61 L386.73,217.61"/>
<path d="M1321.70,167.91 L480.94,167.91"/>
<path d="M1198.23,118.22 L603.73,118.22"/>
<path d="M1054.45,68.52 L746.71,68.52"/>
</g>
<path d="M891,21.6 H909.6" stroke="#d2d2d2" stroke-opacity="0.6" stroke-width="2" fill="none"/>
<g font-size="11.1" fill="#858585" text-anchor="middle" letter-spacing="0.85" stroke="#000" stroke-width="3" paint-order="stroke" stroke-linejoin="round">
<text x="1496.3" y="327.2">+180<tspan dx="0.6" dy="-3.2" font-size="7.5">°</tspan></text>
<text x="1396.9" y="327.2" stroke="none">+210<tspan dx="0.6" dy="-3.2" font-size="7.5">°</tspan></text>
<text x="1297.6" y="327.2" stroke="none">+240<tspan dx="0.6" dy="-3.2" font-size="7.5">°</tspan></text>
<text x="1198.2" y="327.2" stroke="none">+270<tspan dx="0.6" dy="-3.2" font-size="7.5">°</tspan></text>
<text x="1098.9" y="327.2" stroke="none">+300<tspan dx="0.6" dy="-3.2" font-size="7.5">°</tspan></text>
<text x="999.5" y="327.2" stroke="none">+330<tspan dx="0.6" dy="-3.2" font-size="7.5">°</tspan></text>
<text x="900.1" y="327.2" stroke="none">+0<tspan dx="0.6" dy="-3.2" font-size="7.5">°</tspan></text>
<text x="800.8" y="327.2" stroke="none">+30<tspan dx="0.6" dy="-3.2" font-size="7.5">°</tspan></text>
<text x="701.4" y="327.2" stroke="none">+60<tspan dx="0.6" dy="-3.2" font-size="7.5">°</tspan></text>
<text x="602.1" y="327.2" stroke="none">+90<tspan dx="0.6" dy="-3.2" font-size="7.5">°</tspan></text>
<text x="502.7" y="327.2" stroke="none">+120<tspan dx="0.6" dy="-3.2" font-size="7.5">°</tspan></text>
<text x="403.4" y="327.2" stroke="none">+150<tspan dx="0.6" dy="-3.2" font-size="7.5">°</tspan></text>
<text x="304.0" y="327.2">+180<tspan dx="0.6" dy="-3.2" font-size="7.5">°</tspan></text>
<text x="900.1" y="327.2" stroke="none">+0<tspan dx="0.6" dy="-3.2" font-size="7.5">°</tspan></text>
<text x="901.3" y="17.0">+90<tspan dx="0.6" dy="-3.2" font-size="7.5">°</tspan></text>
<text x="901.3" y="116.3">+60<tspan dx="0.6" dy="-3.2" font-size="7.5">°</tspan></text>
<text x="901.3" y="214.7">+30<tspan dx="0.6" dy="-3.2" font-size="7.5">°</tspan></text>
<text x="901.3" y="426.2">−30<tspan dx="0.6" dy="-3.2" font-size="7.5">°</tspan></text>
<text x="901.3" y="525.6">−60<tspan dx="0.6" dy="-3.2" font-size="7.5">°</tspan></text>
<text x="901.3" y="625.0">−90<tspan dx="0.6" dy="-3.2" font-size="7.5">°</tspan></text>
</g>
<g fill="none" stroke="#fff" stroke-opacity="0.2" stroke-width="1.39" stroke-dasharray="1.39 2.29">
<path d="M306.0,322.0 C307.7,320.2 308.8,317.4 316.0,311.0 C323.2,304.6 336.9,292.1 349.4,283.3 C361.9,274.5 377.1,265.7 391.0,258.3 C404.9,250.9 418.9,244.9 432.8,238.9 C446.7,232.9 460.5,227.5 474.4,222.2 C488.3,216.9 502.1,211.9 516.0,207.0 C529.9,202.1 543.9,197.6 557.8,193.0 C571.7,188.4 586.0,183.1 599.4,179.2 C612.8,175.3 628.2,172.1 638.3,169.4 C648.4,166.7 656.4,164.1 660.0,163.0"/>
<path d="M372.0,364.0 C375.3,360.0 384.9,347.7 392.0,340.0 C399.1,332.3 406.4,327.0 414.4,317.8 C422.4,308.6 433.7,293.1 440.0,285.0 C446.3,276.9 443.7,275.7 452.2,269.4 C460.7,263.1 478.0,253.7 491.0,247.2 C504.0,240.7 516.5,236.1 530.0,230.6 C543.5,225.1 557.8,219.5 571.7,213.9 C585.6,208.3 601.8,201.8 613.3,197.2 C624.8,192.5 631.9,190.2 641.0,186.0 C650.1,181.8 663.5,174.3 668.0,172.0"/>
<path d="M478.0,388.0 C475.5,383.1 467.1,366.7 463.0,358.7 C458.9,350.7 455.9,346.1 453.6,340.0 C451.3,333.9 450.5,327.7 449.4,322.0 C448.2,316.3 447.5,312.1 446.7,305.6 C445.9,299.2 443.6,290.7 444.5,283.3 C445.4,275.9 447.1,268.9 452.0,261.0 C456.9,253.1 465.2,243.7 474.0,236.0 C482.8,228.3 494.0,221.2 505.0,215.0 C516.0,208.8 527.5,203.8 540.0,199.0 C552.5,194.2 563.3,191.7 580.0,186.0 C596.7,180.3 630.0,168.5 640.0,165.0"/>
<path d="M566.0,432.0 C561.1,430.2 544.0,427.7 536.7,421.0 C529.4,414.3 526.4,404.5 522.0,391.7 C517.6,378.9 513.4,356.5 510.6,344.0 C507.8,331.5 506.4,325.9 505.0,316.7 C503.6,307.5 501.5,297.3 502.0,289.0 C502.5,280.7 504.1,274.1 507.8,266.7 C511.5,259.3 517.0,251.8 524.4,244.4 C531.8,237.0 541.8,228.9 552.0,222.0 C562.2,215.1 572.6,209.5 585.6,202.8 C598.6,196.1 616.8,189.1 630.0,182.0 C643.2,174.9 659.2,163.7 665.0,160.0"/>
<path d="M635.7,378.8 C633.2,375.4 625.9,367.0 621.0,358.7 C616.1,350.4 609.9,338.8 606.4,329.0 C602.9,319.2 600.9,309.8 600.0,300.0 C599.1,290.2 599.2,280.0 601.0,270.0 C602.8,260.0 606.2,249.7 611.0,240.0 C615.8,230.3 622.7,220.3 630.0,212.0 C637.3,203.7 645.0,197.8 655.0,190.0 C665.0,182.2 684.2,169.2 690.0,165.0"/>
<path d="M963.0,160.0 C965.8,164.4 974.4,177.8 980.0,186.7 C985.6,195.6 991.2,204.7 996.7,213.3 C1002.2,221.9 1010.5,234.1 1013.3,238.3"/>
<path d="M1120.0,150.0 C1124.5,154.4 1136.7,166.7 1146.7,176.7 C1156.7,186.7 1167.8,198.3 1180.0,210.0 C1192.2,221.7 1213.3,240.6 1220.0,246.7"/>
<path d="M868.0,180.0 C870.0,186.1 873.5,198.9 880.0,216.7 C886.5,234.5 897.8,264.5 906.7,286.7 C915.6,308.9 925.0,332.2 933.3,350.0 C941.6,367.8 949.8,378.3 956.7,393.3 C963.7,408.3 972.0,432.2 975.0,440.0"/>
<path d="M888.0,160.0 C890.0,166.7 894.1,181.7 900.0,200.0 C905.9,218.3 915.0,245.0 923.3,270.0 C931.6,295.0 940.5,325.6 950.0,350.0 C959.5,374.4 971.7,399.2 980.0,416.7 C988.3,434.2 996.7,448.6 1000.0,455.0"/>
<path d="M852.0,300.0 C856.7,307.2 870.3,329.4 880.0,343.3 C889.7,357.2 900.5,371.6 910.0,383.3 C919.5,395.0 932.2,408.3 936.7,413.3"/>
<path d="M978.9,67.8 C978.7,69.8 977.9,76.6 977.6,80.0 C977.3,83.4 977.3,86.9 977.2,88.3"/>
</g>
<path d="M754.5,256.0 L756.3,252.9 L758.2,249.7 L760.1,246.6 L762.1,243.4 L764.1,240.3 L766.1,237.1 L768.1,234.0 L770.2,230.9 L772.4,227.7 L774.5,224.6 L776.7,221.5 L779.0,218.4 L781.2,215.2 L783.5,212.1 L785.8,209.0 L788.2,205.9 L790.6,202.8 L793.0,199.7 L795.4,196.6 L797.8,193.5 L800.3,190.5 L802.8,187.4 L805.4,184.3 L807.9,181.3 L810.5,178.2 L813.1,175.2 L815.7,172.1 L818.3,169.1 L820.9,166.1 L823.6,163.1 L826.3,160.1 L829.0,157.1 L831.7,154.1 L834.4,151.2 L837.1,148.2 L839.8,145.3 L842.6,142.4 L845.3,139.5 L848.0,136.6 L850.8,133.8 L853.6,130.9 L856.3,128.1 L859.1,125.3 L861.8,122.6 L864.6,119.8 L867.3,117.1 L870.1,114.5 L872.8,111.8 L875.6,109.3 L878.3,106.7 L881.0,104.2 L883.7,101.8 L886.4,99.4 L889.1,97.1 L891.8,94.8 L894.5,92.7 L897.2,90.6 L899.9,88.6 L902.6,86.7 L905.2,84.9 L907.9,83.2 L910.6,81.6 L913.4,80.2 L916.1,78.9 L918.9,77.8" fill="none" stroke="#ff2000" stroke-width="1.55" stroke-dasharray="1.5 2.18"/>
<path d="M746.0,252.0 L748.2,249.0 L750.5,246.0 L752.8,243.0 L755.2,240.0 L757.5,237.1 L760.0,234.1 L762.4,231.1 L764.9,228.1 L767.4,225.2 L769.9,222.2 L772.5,219.3 L775.1,216.3 L777.7,213.4 L780.4,210.5 L783.0,207.5 L785.7,204.6 L788.5,201.7 L791.2,198.8 L794.0,195.9 L796.8,193.1 L799.6,190.2 L802.4,187.3 L805.2,184.5 L808.1,181.7 L811.0,178.8 L813.8,176.0 L816.7,173.2 L819.7,170.5 L822.6,167.7 L825.5,165.0 L828.4,162.2 L831.4,159.5 L834.3,156.8 L837.3,154.2 L840.3,151.5 L843.2,148.9 L846.2,146.3 L849.2,143.8 L852.1,141.2 L855.1,138.7 L858.0,136.3 L861.0,133.8 L863.9,131.4 L866.9,129.1 L869.8,126.8 L872.7,124.5 L875.7,122.3 L878.6,120.1 L881.5,118.0 L884.4,116.0 L887.3,114.0 L890.2,112.1 L893.0,110.2 L895.9,108.5 L898.8,106.8 L901.6,105.2 L904.5,103.6 L907.4,102.2 L910.3,100.9 L913.2,99.7 L916.1,98.6 L919.0,97.6 L922.0,96.7 L925.0,96.0 L928.0,95.4 L931.1,94.9 L934.2,94.5 L937.4,94.3 L940.6,94.2" fill="none" stroke="#ff2000" stroke-width="1.55" stroke-dasharray="1.5 2.18"/>
<path d="M739.5,265.0 L741.8,262.1 L744.2,259.3 L746.5,256.4 L748.9,253.6 L751.4,250.7 L753.9,247.9 L756.4,245.0 L758.9,242.2 L761.5,239.4 L764.1,236.6 L766.7,233.8 L769.4,231.0 L772.0,228.2 L774.7,225.4 L777.5,222.6 L780.2,219.8 L783.0,217.1 L785.8,214.3 L788.6,211.6 L791.4,208.9 L794.3,206.1 L797.1,203.4 L800.0,200.7 L802.9,198.1 L805.8,195.4 L808.8,192.7 L811.7,190.1 L814.7,187.5 L817.6,184.9 L820.6,182.3 L823.6,179.7 L826.5,177.2 L829.5,174.7 L832.5,172.2 L835.5,169.7 L838.5,167.2 L841.5,164.8 L844.5,162.4 L847.5,160.0 L850.5,157.7 L853.5,155.4 L856.5,153.1 L859.5,150.8 L862.5,148.6 L865.5,146.5 L868.5,144.3 L871.4,142.3 L874.4,140.2 L877.4,138.2 L880.3,136.3 L883.3,134.4 L886.2,132.6 L889.2,130.8 L892.1,129.1 L895.0,127.5 L898.0,125.9 L900.9,124.4 L903.8,122.9 L906.8,121.6 L909.7,120.3 L912.6,119.1 L915.6,118.0 L918.6,117.0 L921.5,116.0 L924.5,115.2 L927.6,114.4 L930.6,113.8 L933.7,113.3 L936.8,112.8 L939.9,112.5 L943.1,112.3 L946.4,112.1 L949.6,112.1 L953.0,112.2 L956.4,112.4 L959.8,112.7 L963.3,113.1" fill="none" stroke="#ff2000" stroke-width="1.55" stroke-dasharray="1.5 2.18"/>
<path d="M738.0,264.0 L740.1,261.0 L742.3,258.0 L744.5,255.0 L746.7,252.0 L749.0,249.0 L751.3,246.0 L753.7,243.0 L756.0,240.1 L758.5,237.1 L760.9,234.1 L763.4,231.1 L765.9,228.2 L768.4,225.2 L771.0,222.3 L773.6,219.3 L776.2,216.4 L778.9,213.5 L781.6,210.6 L784.3,207.6 L787.0,204.7 L789.8,201.8 L792.5,199.0 L795.3,196.1 L798.2,193.2 L801.0,190.4 L803.8,187.5 L806.7,184.7 L809.6,181.9 L812.5,179.1 L815.4,176.3 L818.3,173.5 L821.3,170.8 L824.2,168.0 L827.2,165.3 L830.1,162.6 L833.1,159.9 L836.0,157.2 L839.0,154.6 L842.0,152.0 L845.0,149.4 L848.0,146.8 L850.9,144.3 L853.9,141.8 L856.9,139.3 L859.9,136.9 L862.8,134.5 L865.8,132.2 L868.7,129.8 L871.7,127.6 L874.6,125.4 L877.6,123.2 L880.5,121.1 L883.4,119.0 L886.3,117.0 L889.2,115.1 L892.1,113.2 L895.0,111.4 L897.9,109.7 L900.8,108.1 L903.7,106.6 L906.6,105.1 L909.5,103.8 L912.4,102.5 L915.3,101.4 L918.2,100.3 L921.2,99.4 L924.2,98.6 L927.2,97.9 L930.3,97.4 L933.4,97.0 L936.5,96.7 L939.8,96.5 L943.1,96.5 L946.4,96.6 L949.8,96.8 L953.3,97.2 L956.9,97.7 L960.6,98.3 L964.4,99.0 L968.2,99.9 L972.2,100.9 L976.2,101.9 L980.3,103.1 L984.5,104.4 L988.8,105.9 L993.2,107.3 L997.7,108.9 L1002.2,110.6" fill="none" stroke="#ff2000" stroke-width="1.55" stroke-dasharray="1.5 2.18"/>
<path d="M752.4,259.3 L754.9,256.6 L757.5,253.9 L760.1,251.2 L762.7,248.5 L765.3,245.8 L767.9,243.2 L770.6,240.5 L773.3,237.8 L776.0,235.2 L778.8,232.6 L781.6,229.9 L784.3,227.3 L787.1,224.7 L790.0,222.1 L792.8,219.5 L795.7,217.0 L798.5,214.4 L801.4,211.9 L804.3,209.3 L807.2,206.8 L810.1,204.3 L813.1,201.8 L816.0,199.3 L818.9,196.9 L821.9,194.5 L824.9,192.1 L827.8,189.7 L830.8,187.3 L833.8,184.9 L836.8,182.6 L839.8,180.3 L842.7,178.0 L845.7,175.8 L848.7,173.6 L851.7,171.4 L854.7,169.2 L857.7,167.1 L860.6,165.0 L863.6,162.9 L866.6,160.9 L869.6,158.9 L872.5,156.9 L875.5,155.0 L878.5,153.2 L881.4,151.4 L884.4,149.6 L887.3,147.9 L890.3,146.2 L893.2,144.6 L896.1,143.0 L899.1,141.5 L902.0,140.1 L905.0,138.7 L907.9,137.4 L910.8,136.1 L913.8,134.9 L916.7,133.8 L919.7,132.8 L922.7,131.8 L925.7,130.9 L928.7,130.1 L931.7,129.4" fill="none" stroke="#ff2000" stroke-width="1.55" stroke-dasharray="1.5 2.18"/>
<path d="M743.6,258.0 L746.4,255.5 L749.2,252.9 L752.0,250.4 L754.9,247.9 L757.7,245.4 L760.6,242.9 L763.5,240.4 L766.5,237.9 L769.4,235.5 L772.4,233.0 L775.4,230.6 L778.4,228.1 L781.4,225.7 L784.5,223.3 L787.5,220.9 L790.6,218.6 L793.7,216.2 L796.7,213.9 L799.8,211.5 L802.9,209.2 L806.1,207.0 L809.2,204.7 L812.3,202.4 L815.4,200.2 L818.6,198.0 L821.7,195.8 L824.9,193.7 L828.0,191.6 L831.2,189.5 L834.3,187.4 L837.4,185.3 L840.6,183.3 L843.7,181.3 L846.9,179.4 L850.0,177.4 L853.2,175.6 L856.3,173.7 L859.4,171.9 L862.5,170.1 L865.7,168.4 L868.8,166.7 L871.9,165.0 L875.0,163.4 L878.1,161.8 L881.2,160.3 L884.3,158.9 L887.4,157.4 L890.5,156.1 L893.6,154.8 L896.6,153.5 L899.7,152.3 L902.8,151.2 L905.9,150.1 L909.0,149.1 L912.0,148.1 L915.1,147.2 L918.2,146.4 L921.3,145.7 L924.5,145.0 L927.6,144.4 L930.7,143.8 L933.9,143.4 L937.1,143.0 L940.2,142.6 L943.4,142.4 L946.7,142.2 L949.9,142.1 L953.2,142.1 L956.5,142.1 L959.9,142.3 L963.2,142.5 L966.6,142.7 L970.1,143.1 L973.6,143.5 L977.1,144.0 L980.6,144.6 L984.2,145.2 L987.8,145.9 L991.5,146.7 L995.2,147.5 L998.9,148.4 L1002.7,149.4 L1006.5,150.4 L1010.3,151.5 L1014.2,152.7 L1018.2,153.9 L1022.1,155.2 L1026.1,156.5 L1030.1,157.9 L1034.2,159.3 L1038.3,160.8" fill="none" stroke="#ff2000" stroke-width="1.55" stroke-dasharray="1.5 2.18"/>
<path d="M737.3,270.0 L740.0,267.5 L742.8,265.1 L745.6,262.6 L748.4,260.1 L751.3,257.7 L754.2,255.3 L757.0,252.8 L760.0,250.4 L762.9,248.0 L765.8,245.6 L768.8,243.2 L771.8,240.9 L774.8,238.5 L777.8,236.1 L780.8,233.8 L783.9,231.5 L786.9,229.2 L790.0,226.9 L793.1,224.6 L796.2,222.3 L799.3,220.1 L802.4,217.9 L805.5,215.6 L808.6,213.5 L811.8,211.3 L814.9,209.1 L818.1,207.0 L821.2,204.9 L824.4,202.8 L827.5,200.8 L830.7,198.7 L833.8,196.7 L837.0,194.7 L840.1,192.8 L843.3,190.9 L846.4,189.0 L849.6,187.1 L852.7,185.3 L855.9,183.5 L859.0,181.7 L862.2,180.0 L865.3,178.3 L868.4,176.7 L871.6,175.0 L874.7,173.5 L877.8,172.0 L880.9,170.5 L884.0,169.0 L887.2,167.6 L890.3,166.3 L893.4,165.0 L896.5,163.8 L899.6,162.6 L902.7,161.5 L905.8,160.4 L908.9,159.3 L912.0,158.4 L915.1,157.5 L918.2,156.6 L921.4,155.8 L924.5,155.1 L927.6,154.5 L930.8,153.9 L934.0,153.3 L937.1,152.9 L940.3,152.5 L943.5,152.1 L946.8,151.9 L950.0,151.7 L953.3,151.5 L956.6,151.5 L959.9,151.5 L963.2,151.6 L966.6,151.7 L970.0,151.9 L973.4,152.2 L976.9,152.6 L980.3,153.0 L983.9,153.5 L987.4,154.0 L991.0,154.6 L994.6,155.3 L998.3,156.1 L1002.0,156.9 L1005.7,157.7 L1009.5,158.7 L1013.2,159.6 L1017.1,160.7 L1020.9,161.8 L1024.8,162.9 L1028.8,164.1 L1032.7,165.4 L1036.7,166.7" fill="none" stroke="#ff2000" stroke-width="1.55" stroke-dasharray="1.5 2.18"/>
<path d="M743.6,254.0 L746.8,251.9 L749.9,249.9 L753.1,247.8 L756.3,245.8 L759.5,243.7 L762.8,241.7 L766.0,239.7 L769.2,237.7 L772.5,235.8 L775.8,233.8 L779.0,231.9 L782.3,230.0 L785.6,228.1 L788.9,226.2 L792.2,224.4 L795.5,222.5 L798.8,220.7 L802.1,218.9 L805.4,217.2 L808.7,215.4 L812.0,213.7 L815.3,212.0 L818.6,210.3 L821.9,208.7 L825.2,207.1 L828.5,205.5 L831.8,204.0 L835.1,202.4 L838.4,201.0 L841.7,199.5 L845.0,198.1 L848.3,196.7 L851.5,195.3 L854.8,194.0 L858.1,192.7 L861.3,191.5 L864.6,190.3 L867.9,189.1 L871.1,188.0 L874.4,186.9 L877.6,185.9 L880.8,184.9 L884.1,183.9 L887.3,183.0 L890.5,182.1 L893.8,181.3 L897.0,180.5 L900.2,179.8 L903.4,179.1 L906.7,178.5 L909.9,177.9 L913.1,177.4 L916.4,176.9 L919.6,176.5 L922.8,176.1 L926.1,175.8 L929.3,175.5 L932.6,175.3 L935.9,175.1 L939.2,175.0 L942.4,175.0 L945.7,175.0 L949.1,175.0 L952.4,175.1 L955.7,175.3 L959.1,175.5 L962.4,175.8 L965.8,176.1 L969.2,176.4 L972.6,176.9 L976.1,177.3 L979.5,177.8 L983.0,178.4 L986.5,179.0 L990.0,179.7" fill="none" stroke="#ff2000" stroke-width="1.55" stroke-dasharray="1.5 2.18"/>
<path d="M743.6,254.0 L744.4,250.7 L745.3,247.5 L746.2,244.2 L747.2,240.9 L748.2,237.7 L749.2,234.4 L750.3,231.1 L751.4,227.9 L752.6,224.6 L753.8,221.3 L755.1,218.1 L756.4,214.8 L757.8,211.5 L759.2,208.3 L760.6,205.0 L762.1,201.7 L763.6,198.4 L765.2,195.2 L766.7,191.9 L768.4,188.6 L770.1,185.4 L771.8,182.1 L773.5,178.8 L775.3,175.6 L777.2,172.3 L779.0,169.1 L780.9,165.8 L782.9,162.5 L784.8,159.3 L786.8,156.0 L788.9,152.7 L790.9,149.5 L793.0,146.2 L795.2,142.9 L797.3,139.7 L799.5,136.4 L801.8,133.1 L804.0,129.9 L806.3,126.6 L808.6,123.3 L810.9,120.1 L813.3,116.8 L815.7,113.6 L818.1,110.3 L820.5,107.0 L823.0,103.8 L825.5,100.5 L828.0,97.3 L830.5,94.0 L833.0,90.8 L835.6,87.5 L838.2,84.3 L840.7,81.0 L843.4,77.8 L846.0,74.5 L848.6,71.3 L851.3,68.0 L853.9,64.8 L856.6,61.6 L859.2,58.4 L861.9,55.2 L864.6,52.0 L867.2,48.8 L869.9,45.6 L872.5,42.5" fill="none" stroke="#ff2000" stroke-width="1.55" stroke-dasharray="1.5 2.18"/>
<path d="M747.1,257.6 L748.2,254.3 L749.4,251.0 L750.7,247.7 L751.9,244.5 L753.3,241.2 L754.6,237.9 L756.0,234.6 L757.5,231.3 L759.0,228.0 L760.5,224.7 L762.1,221.4 L763.7,218.2 L765.4,214.9 L767.1,211.6 L768.8,208.3 L770.6,205.0 L772.4,201.7 L774.3,198.5 L776.1,195.2 L778.1,191.9 L780.0,188.6 L782.0,185.3 L784.1,182.0 L786.2,178.8 L788.3,175.5 L790.4,172.2 L792.6,168.9 L794.8,165.6 L797.0,162.4 L799.3,159.1 L801.6,155.8 L803.9,152.5 L806.2,149.3 L808.6,146.0 L811.0,142.7 L813.5,139.4 L815.9,136.2 L818.4,132.9 L820.9,129.6 L823.4,126.4 L826.0,123.1 L828.5,119.8 L831.1,116.6 L833.7,113.3 L836.3,110.1 L839.0,106.8 L841.6,103.6 L844.3,100.3 L847.0,97.1 L849.7,93.8 L852.4,90.6 L855.1,87.4 L857.9,84.2 L860.6,81.0 L863.3,77.8 L866.1,74.6 L868.8,71.4 L871.6,68.2 L874.3,65.1 L877.1,62.0 L879.8,58.9 L882.5,55.8" fill="none" stroke="#ff2000" stroke-width="1.55" stroke-dasharray="1.5 2.18"/>
<path d="M741.0,256.5 L741.6,253.2 L742.2,249.9 L742.8,246.6 L743.5,243.3 L744.3,240.1 L745.0,236.8 L745.9,233.5 L746.8,230.2 L747.7,226.9 L748.7,223.6 L749.7,220.3 L750.8,217.0 L751.9,213.8 L753.0,210.5 L754.2,207.2 L755.5,203.9 L756.7,200.6 L758.1,197.3 L759.4,194.0 L760.8,190.8 L762.3,187.5 L763.8,184.2 L765.3,180.9 L766.9,177.7 L768.5,174.4 L770.2,171.1 L771.8,167.8 L773.6,164.6 L775.3,161.3 L777.1,158.0 L779.0,154.7 L780.8,151.5 L782.7,148.2 L784.7,145.0 L786.6,141.7 L788.6,138.4 L790.6,135.2 L792.7,131.9 L794.8,128.7 L796.9,125.4 L799.0,122.2 L801.2,119.0 L803.4,115.7 L805.6,112.5 L807.9,109.3 L810.1,106.1 L812.4,102.9 L814.7,99.7 L817.0,96.5 L819.3,93.3 L821.7,90.1 L824.0,87.0 L826.3,83.8 L828.7,80.7 L831.0,77.6 L833.4,74.5 L835.7,71.4 L838.0,68.4 L840.3,65.4 L842.5,62.5" fill="none" stroke="#ff2000" stroke-width="1.55" stroke-dasharray="1.5 2.18"/>
<path d="M751.0,268.0 L752.2,264.7 L753.4,261.5 L754.7,258.2 L756.0,254.9 L757.3,251.7 L758.7,248.4 L760.2,245.1 L761.6,241.9 L763.2,238.6 L764.7,235.3 L766.3,232.1 L768.0,228.8 L769.6,225.5 L771.4,222.3 L773.1,219.0 L774.9,215.8 L776.7,212.5 L778.6,209.2 L780.5,206.0 L782.4,202.7 L784.4,199.5 L786.4,196.2 L788.4,193.0 L790.5,189.7 L792.6,186.5 L794.7,183.2 L796.9,180.0 L799.1,176.7 L801.3,173.5 L803.5,170.3 L805.8,167.0 L808.1,163.8 L810.4,160.5 L812.8,157.3 L815.1,154.1 L817.5,150.9 L819.9,147.6 L822.4,144.4 L824.8,141.2 L827.3,138.0 L829.8,134.8 L832.3,131.6 L834.9,128.4 L837.4,125.2 L840.0,122.0 L842.5,118.9 L845.1,115.7 L847.7,112.5 L850.3,109.4 L852.9,106.2 L855.6,103.1 L858.2,100.0 L860.8,96.9 L863.4,93.8 L866.1,90.7 L868.7,87.7 L871.3,84.7 L874.0,81.7 L876.6,78.7 L879.2,75.8" fill="none" stroke="#ff2000" stroke-width="1.55" stroke-dasharray="1.5 2.18"/>
<path d="M740.0,259.5 L740.6,256.2 L741.2,253.0 L741.9,249.7 L742.7,246.5 L743.4,243.2 L744.3,240.0 L745.1,236.7 L746.0,233.5 L747.0,230.2 L748.0,227.0 L749.1,223.7 L750.1,220.5 L751.3,217.2 L752.5,214.0 L753.7,210.7 L755.0,207.5 L756.3,204.2 L757.6,201.0 L759.0,197.8 L760.4,194.5 L761.9,191.3 L763.4,188.0 L765.0,184.8 L766.6,181.5 L768.2,178.3 L769.9,175.0 L771.6,171.8 L773.3,168.5 L775.1,165.3 L776.9,162.1 L778.8,158.8 L780.7,155.6 L782.6,152.4 L784.6,149.1 L786.5,145.9 L788.6,142.6 L790.6,139.4 L792.7,136.2 L794.8,133.0 L796.9,129.7 L799.1,126.5 L801.3,123.3 L803.5,120.1 L805.8,116.8 L808.0,113.6 L810.3,110.4 L812.7,107.2 L815.0,104.0" fill="none" stroke="#ff2000" stroke-width="1.55" stroke-dasharray="1.5 2.18"/>
<path d="M748.9,264.7 L750.3,261.5 L751.6,258.3 L753.1,255.1 L754.6,251.9 L756.1,248.8 L757.6,245.6 L759.2,242.4 L760.9,239.2 L762.6,236.0 L764.3,232.8 L766.0,229.7 L767.8,226.5 L769.6,223.3 L771.5,220.1 L773.4,217.0 L775.3,213.8 L777.3,210.6 L779.3,207.4 L781.4,204.3 L783.4,201.1 L785.5,197.9 L787.6,194.8 L789.8,191.6 L792.0,188.5 L794.2,185.3 L796.5,182.1 L798.7,179.0 L801.0,175.8 L803.4,172.7 L805.7,169.6 L808.1,166.4 L810.5,163.3 L812.9,160.1 L815.4,157.0 L817.8,153.9 L820.3,150.8 L822.8,147.7 L825.3,144.6 L827.9,141.5 L830.4,138.4 L833.0,135.3 L835.6,132.2 L838.2,129.1 L840.8,126.1 L843.4,123.0 L846.0,120.0" fill="none" stroke="#ff2000" stroke-width="1.55" stroke-dasharray="1.5 2.18"/>
<path d="M739.5,265.0 L740.7,261.8 L741.9,258.5 L743.1,255.3 L744.5,252.0 L745.8,248.8 L747.2,245.6 L748.6,242.3 L750.1,239.1 L751.7,235.8 L753.2,232.6 L754.8,229.4 L756.5,226.1 L758.2,222.9 L759.9,219.6 L761.7,216.4 L763.5,213.2 L765.4,209.9 L767.3,206.7 L769.2,203.5 L771.2,200.2 L773.2,197.0 L775.3,193.8 L777.4,190.5 L779.5,187.3 L781.6,184.1 L783.8,180.8 L786.0,177.6 L788.3,174.4 L790.6,171.2 L792.9,167.9 L795.2,164.7 L797.6,161.5 L800.0,158.3 L802.5,155.1 L804.9,151.8 L807.4,148.6 L809.9,145.4 L812.4,142.2 L815.0,139.0" fill="none" stroke="#ff2000" stroke-width="1.55" stroke-dasharray="1.5 2.18"/>
<path d="M750.5,262.5 L752.3,259.4 L754.2,256.3 L756.1,253.2 L758.1,250.1 L760.1,247.0 L762.1,243.9 L764.2,240.9 L766.3,237.8 L768.4,234.7 L770.6,231.6 L772.8,228.6 L775.0,225.5 L777.3,222.4 L779.6,219.4 L781.9,216.3 L784.3,213.3 L786.6,210.2 L789.0,207.2 L791.5,204.2 L793.9,201.1 L796.4,198.1 L798.9,195.1 L801.5,192.1 L804.0,189.1 L806.6,186.1 L809.2,183.1 L811.8,180.1 L814.4,177.1 L817.1,174.2 L819.7,171.2 L822.4,168.3 L825.1,165.4 L827.8,162.5 L830.5,159.6 L833.2,156.7 L836.0,153.8 L838.7,151.0 L841.5,148.1 L844.2,145.3 L847.0,142.5" fill="none" stroke="#ff2000" stroke-width="1.55" stroke-dasharray="1.5 2.18"/>
<path d="M757.0,263.5 L759.0,260.5 L761.1,257.5 L763.2,254.5 L765.4,251.5 L767.6,248.5 L769.8,245.5 L772.0,242.5 L774.3,239.5 L776.6,236.5 L778.9,233.6 L781.3,230.6 L783.6,227.6 L786.1,224.7 L788.5,221.7 L791.0,218.8 L793.4,215.9 L796.0,212.9 L798.5,210.0 L801.0,207.1 L803.6,204.2 L806.2,201.3 L808.8,198.4 L811.4,195.5 L814.1,192.6 L816.7,189.8 L819.4,186.9 L822.1,184.1 L824.8,181.3 L827.5,178.5 L830.3,175.7 L833.0,172.9 L835.7,170.2 L838.5,167.4 L841.2,164.7 L844.0,162.0" fill="none" stroke="#ff2000" stroke-width="1.55" stroke-dasharray="1.5 2.18"/>
<path d="M743.6,262.0 L744.6,258.8 L745.6,255.6 L746.7,252.3 L747.8,249.1 L748.9,245.9 L750.1,242.7 L751.3,239.5 L752.6,236.2 L753.9,233.0 L755.3,229.8 L756.7,226.6 L758.1,223.4 L759.6,220.1 L761.2,216.9 L762.7,213.7 L764.3,210.5 L766.0,207.3 L767.7,204.0 L769.4,200.8 L771.2,197.6 L772.9,194.4 L774.8,191.2 L776.7,188.0 L778.6,184.7 L780.5,181.5 L782.5,178.3 L784.5,175.1 L786.5,171.9 L788.6,168.6 L790.7,165.4 L792.8,162.2 L795.0,159.0" fill="none" stroke="#ff2000" stroke-width="1.55" stroke-dasharray="1.5 2.18"/>
<path d="M735.5,263.5 L736.3,260.3 L737.1,257.0 L738.0,253.8 L738.9,250.6 L739.8,247.3 L740.8,244.1 L741.9,240.9 L743.0,237.6 L744.1,234.4 L745.3,231.2 L746.6,227.9 L747.8,224.7 L749.2,221.5 L750.5,218.2 L751.9,215.0 L753.4,211.8 L754.9,208.6 L756.4,205.3 L758.0,202.1 L759.6,198.9 L761.3,195.6 L763.0,192.4 L764.7,189.2 L766.5,185.9 L768.3,182.7 L770.2,179.5 L772.1,176.2 L774.0,173.0" fill="none" stroke="#ff2000" stroke-width="1.55" stroke-dasharray="1.5 2.18"/>
<path d="M759.6,261.1 L758.4,258.3 L757.3,255.6 L756.1,252.8 L755.0,250.1 L753.9,247.4 L752.9,244.6 L751.9,241.9 L750.9,239.2 L749.9,236.5 L749.0,233.8 L748.1,231.1 L747.2,228.4 L746.3,225.8 L745.5,223.1 L744.7,220.5 L743.9,217.8 L743.2,215.2 L742.4,212.6 L741.7,210.0 L741.0,207.4 L740.4,204.9 L739.7,202.3 L739.1,199.8 L738.5,197.3 L737.9,194.8 L737.3,192.3 L736.8,189.8 L736.2,187.4 L735.7,185.0 L735.2,182.6 L734.6,180.2 L734.1,177.8 L733.6,175.5 L733.1,173.2 L732.6,171.0 L732.1,168.7 L731.6,166.5 L731.1,164.4 L730.5,162.2 L730.0,160.1 L729.4,158.1 L728.9,156.0 L728.3,154.1 L727.6,152.1 L727.0,150.2 L726.3,148.4 L725.5,146.6 L724.7,144.9 L723.9,143.2 L723.0,141.5 L722.1,140.0 L721.1,138.5 L720.0,137.0 L718.8,135.6 L717.6,134.3 L716.3,133.1 L714.8,131.9 L713.3,130.8" fill="none" stroke="#ff2000" stroke-width="1.55" stroke-dasharray="1.5 2.18"/>
<path d="M732.9,260.8 L731.1,258.6 L729.3,256.3 L727.5,254.1 L725.7,251.9 L724.0,249.7 L722.3,247.5 L720.6,245.4 L718.9,243.2 L717.2,241.1 L715.6,239.0 L714.0,236.8 L712.3,234.7 L710.7,232.7 L709.2,230.6 L707.6,228.5 L706.0,226.5 L704.5,224.5 L703.0,222.5 L701.4,220.5 L699.9,218.6 L698.4,216.7 L696.9,214.8 L695.4,212.9 L693.9,211.0 L692.4,209.2 L690.9,207.4 L689.5,205.6 L688.0,203.8 L686.5,202.1 L685.0,200.4 L683.5,198.7 L682.0,197.1 L680.4,195.5 L678.9,193.9 L677.3,192.4 L675.8,190.9 L674.2,189.4 L672.6,188.0 L670.9,186.6 L669.3,185.3 L667.6,183.9 L665.9,182.7 L664.1,181.4 L662.3,180.3 L660.5,179.1 L658.6,178.0 L656.7,177.0 L654.7,176.0 L652.7,175.0 L650.6,174.1 L648.5,173.3 L646.3,172.5 L644.0,171.7 L641.7,171.0 L639.3,170.4 L636.8,169.8 L634.3,169.2 L631.7,168.8 L629.0,168.3 L626.3,168.0 L623.4,167.6 L620.5,167.4 L617.5,167.2" fill="none" stroke="#ff2000" stroke-width="1.55" stroke-dasharray="1.5 2.18"/>
<path d="M744.0,268.0 L745.7,265.0 L747.5,262.0 L749.3,259.0 L751.2,256.0 L753.1,253.0 L755.0,250.0 L756.9,247.0 L758.9,244.0 L760.9,241.0 L763.0,238.0 L765.1,235.0 L767.2,232.0 L769.4,229.0 L771.6,226.0 L773.8,223.1 L776.0,220.1 L778.3,217.1 L780.6,214.2 L783.0,211.2 L785.3,208.3 L787.7,205.3 L790.1,202.4 L792.5,199.4 L795.0,196.5" fill="none" stroke="#ff2000" stroke-width="1.55" stroke-dasharray="1.5 2.18"/>
<path d="M762.2,270.5 L764.2,267.6 L766.3,264.7 L768.3,261.7 L770.4,258.8 L772.6,255.9 L774.7,253.0 L776.9,250.1 L779.1,247.2 L781.4,244.3 L783.6,241.5 L785.9,238.6 L788.3,235.7 L790.6,232.8 L793.0,230.0 L795.4,227.1 L797.8,224.3 L800.2,221.4 L802.7,218.6 L805.1,215.8 L807.6,212.9 L810.1,210.1 L812.7,207.3 L815.2,204.5 L817.7,201.8 L820.3,199.0 L822.9,196.2 L825.5,193.5" fill="none" stroke="#ff2000" stroke-width="1.55" stroke-dasharray="1.5 2.18"/>
<path d="M565.5,268.0 L566.1,264.8 L566.8,261.7 L567.6,258.5 L568.5,255.4 L569.5,252.2 L570.6,249.1 L571.7,246.0 L573.0,242.8 L574.3,239.7 L575.7,236.5 L577.2,233.4 L578.8,230.3 L580.5,227.1 L582.3,224.0 L584.1,220.9 L586.1,217.7 L588.1,214.6 L590.2,211.5 L592.4,208.4 L594.6,205.3 L597.0,202.2 L599.4,199.1 L601.9,196.0 L604.4,192.9 L607.1,189.8 L609.8,186.7 L612.5,183.6 L615.4,180.5 L618.3,177.5 L621.3,174.4 L624.3,171.4 L627.4,168.3 L630.6,165.3 L633.8,162.2 L637.0,159.2 L640.4,156.2 L643.7,153.2 L647.1,150.2 L650.6,147.2 L654.1,144.3 L657.6,141.3 L661.2,138.4 L664.8,135.5 L668.4,132.6 L672.1,129.7 L675.7,126.8 L679.4,124.0 L683.1,121.1 L686.8,118.3 L690.4,115.6 L694.1,112.8 L697.7,110.1 L701.3,107.5 L704.9,104.8 L708.4,102.2 L711.8,99.7 L715.2,97.2 L718.5,94.8 L721.6,92.4 L724.7,90.1 L727.5,87.9 L730.2,85.7 L732.7,83.7 L735.0,81.7" fill="none" stroke="#ffaf0f" stroke-width="1.55" stroke-dasharray="1.5 2.18"/>
<path d="M565.5,268.0 L566.1,264.8 L566.8,261.7 L567.6,258.5 L568.5,255.4 L569.5,252.2 L570.6,249.1 L571.7,246.0 L573.0,242.8 L574.3,239.7 L575.7,236.5 L577.2,233.4 L578.8,230.3 L580.5,227.1 L582.3,224.0 L584.1,220.9 L586.1,217.7 L588.1,214.6 L590.2,211.5 L592.4,208.4 L594.6,205.3 L597.0,202.2 L599.4,199.1 L601.9,196.0 L604.4,192.9 L607.1,189.8 L609.8,186.7 L612.5,183.6 L615.4,180.5 L618.3,177.5 L621.3,174.4 L624.3,171.4 L627.4,168.3 L630.6,165.3 L633.8,162.2 L637.0,159.2 L640.4,156.2 L643.7,153.2 L647.1,150.2 L650.6,147.2 L654.1,144.3 L657.6,141.3 L661.2,138.4 L664.8,135.5 L668.4,132.6 L672.1,129.7 L675.7,126.8 L679.4,124.0 L683.1,121.1 L686.8,118.3 L690.4,115.6 L694.1,112.8 L697.7,110.1 L701.3,107.5 L704.9,104.8 L708.4,102.2 L711.8,99.7 L715.2,97.2 L718.5,94.8 L721.6,92.4 L724.7,90.1 L727.5,87.9 L730.2,85.7 L732.7,83.7 L735.0,81.7" fill="none" stroke="#ffaf0f" stroke-width="1.5" stroke-dasharray="1.0 2.68" stroke-dashoffset="1.6"/>
<path d="M574.2,258.3 L575.6,255.1 L577.1,251.8 L578.7,248.6 L580.4,245.4 L582.2,242.1 L584.1,238.9 L586.0,235.7 L588.1,232.5 L590.2,229.2 L592.4,226.0 L594.8,222.8 L597.2,219.5 L599.7,216.3 L602.3,213.1 L604.9,209.9 L607.7,206.6 L610.5,203.4 L613.4,200.2 L616.4,197.0 L619.5,193.7 L622.7,190.5 L625.9,187.3 L629.3,184.1 L632.6,180.9 L636.1,177.6 L639.7,174.4 L643.3,171.2 L647.0,168.0 L650.7,164.8 L654.6,161.6 L658.5,158.4 L662.4,155.2 L666.4,152.0 L670.5,148.8 L674.7,145.6 L678.9,142.4 L683.2,139.2 L687.5,136.0 L691.9,132.8 L696.3,129.6 L700.8,126.5 L705.3,123.3 L709.9,120.1 L714.5,116.9 L719.2,113.8 L723.9,110.6 L728.6,107.5 L733.4,104.4 L738.2,101.2 L743.0,98.1 L747.9,95.0 L752.7,91.9 L757.6,88.8 L762.5,85.8 L767.4,82.7 L772.2,79.7 L777.1,76.7 L781.9,73.7 L786.7,70.8" fill="none" stroke="#ffaf0f" stroke-width="1.55" stroke-dasharray="1.5 2.18"/>
<path d="M573.3,257.5 L576.5,254.6 L579.8,251.8 L583.2,248.9 L586.6,246.1 L590.2,243.2 L593.7,240.4 L597.4,237.5 L601.1,234.7 L604.8,231.9 L608.6,229.1 L612.5,226.3 L616.5,223.5 L620.5,220.7 L624.5,217.9 L628.6,215.1 L632.7,212.4 L636.9,209.6 L641.2,206.9 L645.4,204.2 L649.8,201.4 L654.1,198.7 L658.5,196.0 L663.0,193.4 L667.4,190.7 L671.9,188.1 L676.5,185.4 L681.0,182.8 L685.6,180.2 L690.2,177.6 L694.8,175.1 L699.4,172.5 L704.1,170.0 L708.7,167.5 L713.4,165.1 L718.1,162.6 L722.7,160.2 L727.4,157.8 L732.1,155.5 L736.7,153.2 L741.4,150.9 L746.0,148.6 L750.6,146.4 L755.2,144.2 L759.8,142.1 L764.4,140.0 L768.9,137.9 L773.4,136.0 L777.9,134.0 L782.3,132.1 L786.7,130.3 L791.0,128.5" fill="none" stroke="#ffaf0f" stroke-width="1.55" stroke-dasharray="1.5 2.18"/>
<path d="M564.0,266.5 L567.4,264.1 L570.8,261.6 L574.3,259.2 L577.9,256.8 L581.5,254.4 L585.1,252.0 L588.8,249.6 L592.5,247.3 L596.3,244.9 L600.1,242.6 L603.9,240.2 L607.8,237.9 L611.7,235.6 L615.6,233.3 L619.6,231.0 L623.6,228.7 L627.7,226.5 L631.7,224.2 L635.8,222.0 L639.9,219.8 L644.1,217.6 L648.2,215.4 L652.4,213.2 L656.6,211.1 L660.8,209.0 L665.0,206.9 L669.2,204.8 L673.4,202.8 L677.7,200.8 L681.9,198.7 L686.2,196.8 L690.4,194.8 L694.7,192.9 L698.9,191.0 L703.2,189.1 L707.4,187.3 L711.6,185.5 L715.8,183.7 L720.0,182.0 L724.2,180.3 L728.4,178.7 L732.5,177.0 L736.7,175.4 L740.8,173.9 L744.9,172.4 L748.9,170.9 L753.0,169.5 L757.0,168.2 L761.0,166.8 L764.9,165.6 L768.9,164.3 L772.8,163.2 L776.6,162.0 L780.4,161.0 L784.2,160.0 L788.0,159.0" fill="none" stroke="#ffaf0f" stroke-width="1.55" stroke-dasharray="1.5 2.18"/>
<path d="M593.3,265.3 L595.1,262.0 L597.0,258.7 L599.0,255.5 L601.0,252.2 L603.2,248.9 L605.4,245.6 L607.7,242.3 L610.2,239.1 L612.7,235.8 L615.2,232.5 L617.9,229.2 L620.7,226.0 L623.5,222.7 L626.4,219.4 L629.4,216.1 L632.5,212.8 L635.7,209.6 L638.9,206.3 L642.3,203.0 L645.7,199.7 L649.1,196.5 L652.7,193.2 L656.3,189.9 L660.0,186.6 L663.8,183.4 L667.6,180.1 L671.5,176.8 L675.5,173.6 L679.5,170.3 L683.6,167.0 L687.8,163.7 L692.0,160.5 L696.3,157.2 L700.6,153.9 L705.0,150.7 L709.5,147.4 L714.0,144.1 L718.6,140.9 L723.2,137.6 L727.8,134.4 L732.6,131.1 L737.3,127.8 L742.1,124.6 L747.0,121.3 L751.9,118.1 L756.8,114.8 L761.8,111.6 L766.8,108.3 L771.9,105.1 L776.9,101.9 L782.1,98.6 L787.2,95.4 L792.4,92.2 L797.5,89.0 L802.7,85.8 L808.0,82.6 L813.2,79.4 L818.4,76.2 L823.7,73.0 L828.9,69.9 L834.2,66.7 L839.4,63.6 L844.6,60.5 L849.8,57.5 L855.0,54.5 L860.1,51.5 L865.1,48.6 L870.0,45.8" fill="none" stroke="#ffaf0f" stroke-width="1.55" stroke-dasharray="1.5 2.18"/>
<path d="M583.3,267.5 L585.7,264.3 L588.1,261.1 L590.6,258.0 L593.3,254.8 L596.0,251.6 L598.7,248.5 L601.6,245.3 L604.6,242.1 L607.6,239.0 L610.7,235.8 L613.9,232.7 L617.2,229.5 L620.5,226.3 L623.9,223.2 L627.4,220.0 L631.0,216.9 L634.6,213.8 L638.3,210.6 L642.1,207.5 L646.0,204.3 L649.9,201.2 L653.8,198.1 L657.9,195.0 L662.0,191.9 L666.1,188.7 L670.3,185.6 L674.6,182.5 L678.9,179.4 L683.3,176.4 L687.7,173.3 L692.2,170.2 L696.7,167.1 L701.3,164.1 L705.9,161.0 L710.5,158.0 L715.2,155.0 L719.9,151.9 L724.7,148.9 L729.5,145.9 L734.3,143.0 L739.1,140.0 L744.0,137.0 L748.8,134.1 L753.7,131.2 L758.6,128.3 L763.5,125.4 L768.5,122.5 L773.4,119.7 L778.3,116.9 L783.2,114.1 L788.1,111.4 L793.0,108.7 L797.9,106.0 L802.7,103.4 L807.5,100.8 L812.3,98.2 L817.0,95.7 L821.7,93.3 L826.3,90.9 L830.9,88.7 L835.4,86.5 L839.9,84.3 L844.2,82.3 L848.5,80.4 L852.7,78.6 L856.8,76.9 L860.8,75.4 L864.7,74.0 L868.5,72.8 L872.2,71.7 L875.8,70.9 L879.3,70.2 L882.7,69.7 L886.1,69.5 L889.4,69.4 L892.7,69.6 L895.9,69.9 L899.2,70.5 L902.4,71.2 L905.6,72.2" fill="none" stroke="#ffaf0f" stroke-width="1.55" stroke-dasharray="1.5 2.18"/>
<path d="M582.0,266.0 L584.5,262.8 L587.0,259.7 L589.6,256.5 L592.4,253.4 L595.2,250.2 L598.0,247.1 L601.0,243.9 L604.1,240.8 L607.2,237.7 L610.4,234.5 L613.7,231.4 L617.0,228.2 L620.5,225.1 L624.0,222.0 L627.5,218.9 L631.2,215.7 L634.9,212.6 L638.7,209.5 L642.6,206.4 L646.5,203.3 L650.5,200.2 L654.5,197.1 L658.6,194.0 L662.8,190.9 L667.0,187.8 L671.3,184.8 L675.6,181.7 L680.0,178.6 L684.4,175.6 L688.9,172.5 L693.4,169.5 L698.0,166.5 L702.6,163.5 L707.3,160.4 L711.9,157.4 L716.7,154.5 L721.4,151.5 L726.2,148.5 L731.0,145.6 L735.8,142.6 L740.7,139.7 L745.5,136.8 L750.4,133.9 L755.3,131.1 L760.2,128.2 L765.1,125.4 L770.0,122.6 L775.0,119.9 L779.9,117.1 L784.7,114.4 L789.6,111.8 L794.5,109.1 L799.3,106.6 L804.1,104.0 L808.8,101.5 L813.6,99.1 L818.2,96.7 L822.9,94.4 L827.4,92.2 L831.9,90.0 L836.3,87.9 L840.7,85.9 L845.0,84.1 L849.2,82.3 L853.3,80.7 L857.3,79.1 L861.2,77.8 L865.0,76.5 L868.7,75.5 L872.3,74.6 L875.9,73.9 L879.4,73.3 L882.8,73.0 L886.1,72.8 L889.4,72.9 L892.6,73.1 L895.9,73.6 L899.1,74.2 L902.3,75.0 L905.5,76.0 L908.7,77.1 L912.0,78.4 L915.2,79.9 L918.5,81.5 L921.9,83.2 L925.3,85.0 L928.7,86.9 L932.1,89.0 L935.6,91.1" fill="none" stroke="#ffaf0f" stroke-width="1.55" stroke-dasharray="1.5 2.18"/>
<path d="M566.0,266.0 L568.7,262.9 L571.5,259.8 L574.4,256.8 L577.4,253.7 L580.4,250.6 L583.5,247.5 L586.7,244.5 L590.0,241.4 L593.4,238.3 L596.9,235.3 L600.4,232.2 L604.0,229.2 L607.6,226.1 L611.4,223.1 L615.2,220.1 L619.1,217.0 L623.0,214.0 L627.0,211.0 L631.1,208.0 L635.3,205.0 L639.5,202.0 L643.7,199.0 L648.0,196.0 L652.4,193.0 L656.8,190.0 L661.3,187.1 L665.8,184.1 L670.4,181.2 L675.0,178.2 L679.6,175.3 L684.3,172.4 L689.1,169.5 L693.8,166.6 L698.6,163.7 L703.5,160.9 L708.3,158.0 L713.2,155.2 L718.1,152.4 L723.0,149.6 L727.9,146.8 L732.9,144.1 L737.8,141.4 L742.8,138.7 L747.8,136.0 L752.7,133.4 L757.7,130.7 L762.6,128.2 L767.5,125.6 L772.4,123.1 L777.3,120.6 L782.2,118.2 L787.0,115.8 L791.8,113.5 L796.6,111.2 L801.3,109.0 L805.9,106.9 L810.5,104.8 L815.1,102.8 L819.6,100.8 L824.0,99.0 L828.3,97.2 L832.6,95.5 L836.7,94.0 L840.8,92.5 L844.9,91.2 L848.8,90.0 L852.6,88.9 L856.4,87.9 L860.1,87.1 L863.7,86.4 L867.2,85.9 L870.6,85.5 L874.0,85.3 L877.3,85.2 L880.6,85.3 L883.8,85.6 L887.0,86.0 L890.2,86.5 L893.3,87.2 L896.4,88.1 L899.5,89.1 L902.7,90.2 L905.8,91.4 L908.9,92.8" fill="none" stroke="#ffaf0f" stroke-width="1.55" stroke-dasharray="1.5 2.18"/>
<path d="M574.0,259.0 L576.2,256.5 L578.4,254.0 L580.7,251.5 L583.0,249.0" fill="none" stroke="#ffaf0f" stroke-width="1.55" stroke-dasharray="1.5 2.18"/>
<path d="M822.3,246.5 L821.3,243.6 L820.4,240.6 L819.4,237.7 L818.5,234.8 L817.6,231.9 L816.7,229.0 L815.8,226.1 L815.0,223.2 L814.2,220.3 L813.3,217.4 L812.5,214.6 L811.8,211.7 L811.0,208.8 L810.3,206.0 L809.5,203.1 L808.8,200.3 L808.1,197.5 L807.5,194.7 L806.8,191.9 L806.1,189.1 L805.5,186.3 L804.9,183.6 L804.3,180.8 L803.7,178.1 L803.1,175.4 L802.6,172.7 L802.0,170.0 L801.5,167.4 L801.0,164.7 L800.4,162.1 L799.9,159.5 L799.4,156.9 L798.9,154.4 L798.4,151.9 L797.9,149.4 L797.4,146.9 L796.8,144.5 L796.3,142.0 L795.8,139.7 L795.3,137.3 L794.7,135.1 L794.1,132.8 L793.5,130.6 L792.9,128.4 L792.3,126.3 L791.6,124.3 L790.9,122.3 L790.1,120.3 L789.3,118.5 L788.4,116.7 L787.5,114.9 L786.4,113.2 L785.4,111.7 L784.2,110.2 L782.9,108.7 L781.5,107.4 L780.1,106.2 L778.5,105.0 L776.7,104.0 L774.8,103.1 L772.8,102.3 L770.6,101.6 L768.3,101.0 L765.7,100.5 L763.0,100.2" fill="none" stroke="#00f078" stroke-width="1.55" stroke-dasharray="1.5 2.18"/>
<path d="M846.3,221.1 L844.1,219.0 L842.0,216.8 L839.8,214.7 L837.6,212.7 L835.5,210.6 L833.3,208.6 L831.2,206.5 L829.0,204.6 L826.9,202.6 L824.7,200.6 L822.6,198.7 L820.4,196.9 L818.3,195.0 L816.1,193.2 L814.0,191.4 L811.8,189.6 L809.7,187.9 L807.5,186.2 L805.3,184.5 L803.1,182.9 L800.9,181.3 L798.7,179.8 L796.5,178.2 L794.3,176.8 L792.0,175.4 L789.8,174.0 L787.5,172.6 L785.2,171.3 L782.9,170.1 L780.5,168.9 L778.1,167.8 L775.7,166.7 L773.3,165.6 L770.8,164.6 L768.3,163.7 L765.8,162.8 L763.2,162.0 L760.6,161.2 L757.9,160.5 L755.2,159.9 L752.5,159.3 L749.6,158.8 L746.8,158.3 L743.9,157.9 L740.9,157.6 L737.8,157.3 L734.7,157.1 L731.6,157.0 L728.4,156.9 L725.1,156.9 L721.7,156.9 L718.3,157.0 L714.8,157.2 L711.2,157.5 L707.6,157.8 L703.9,158.1 L700.1,158.6 L696.3,159.1 L692.3,159.6 L688.3,160.2 L684.3,160.9 L680.2,161.7 L676.0,162.5 L671.7,163.3 L667.4,164.2 L663.0,165.2 L658.5,166.2 L654.0,167.3 L649.4,168.4 L644.8,169.6 L640.1,170.8 L635.3,172.1 L630.5,173.4 L625.7,174.7 L620.8,176.1 L615.9,177.6 L610.9,179.1 L605.9,180.6 L600.9,182.2 L595.8,183.8" fill="none" stroke="#00f078" stroke-width="1.55" stroke-dasharray="1.5 2.18"/>
<path d="M846.3,217.0 L843.1,216.6 L840.0,216.2 L836.8,215.8 L833.6,215.5 L830.4,215.1 L827.2,214.9 L824.0,214.6 L820.8,214.4 L817.6,214.3 L814.4,214.1 L811.1,214.0 L807.9,214.0 L804.6,213.9 L801.4,213.9 L798.1,213.9 L794.8,214.0 L791.5,214.1 L788.2,214.2 L784.9,214.4 L781.5,214.6 L778.2,214.8 L774.8,215.1 L771.5,215.4 L768.1,215.8 L764.7,216.1 L761.3,216.5 L757.8,217.0 L754.4,217.4 L750.9,217.9 L747.5,218.4 L744.0,219.0" fill="none" stroke="#00f078" stroke-width="1.55" stroke-dasharray="1.5 2.18"/>
<path d="M835.6,231.2 L837.4,228.2 L839.2,225.2 L841.1,222.2 L843.0,219.3 L844.8,216.3 L846.7,213.3 L848.6,210.4 L850.5,207.4 L852.4,204.5 L854.4,201.6 L856.3,198.6 L858.3,195.7 L860.2,192.8 L862.2,189.9 L864.2,187.0 L866.1,184.1 L868.1,181.3 L870.1,178.4 L872.1,175.5 L874.1,172.7 L876.1,169.9 L878.1,167.1 L880.1,164.3 L882.1,161.5 L884.2,158.7 L886.2,156.0 L888.2,153.3 L890.2,150.6 L892.2,147.9 L894.3,145.2 L896.3,142.6 L898.3,140.0" fill="none" stroke="#00f078" stroke-width="1.55" stroke-dasharray="1.5 2.18"/>
<path d="M806.1,237.5 L806.1,234.4 L806.1,231.4 L806.2,228.3 L806.3,225.2 L806.4,222.2 L806.5,219.1 L806.7,216.0 L806.8,213.0 L807.1,209.9 L807.3,206.8 L807.5,203.8 L807.8,200.7 L808.1,197.7 L808.4,194.6 L808.8,191.6 L809.1,188.5 L809.5,185.5" fill="none" stroke="#00f078" stroke-width="1.55" stroke-dasharray="1.5 2.18"/>
<path d="M705.9,235.9 L707.7,232.6 L709.6,229.3 L711.6,226.0 L713.6,222.7 L715.7,219.4 L717.8,216.1 L719.9,212.8 L722.2,209.5 L724.5,206.2 L726.8,202.9 L729.2,199.6 L731.6,196.3 L734.1,193.0 L736.6,189.7 L739.2,186.5 L741.9,183.2 L744.5,179.9 L747.3,176.6 L750.0,173.3 L752.9,170.0 L755.7,166.7 L758.6,163.4 L761.6,160.1 L764.6,156.8 L767.6,153.5 L770.7,150.3 L773.8,147.0 L776.9,143.7 L780.1,140.4 L783.3,137.1 L786.6,133.8 L789.8,130.6 L793.2,127.3 L796.5,124.0" fill="none" stroke="#a5ff2d" stroke-width="1.55" stroke-dasharray="1.5 2.18"/>
<path d="M724.9,239.8 L727.9,237.1 L731.0,234.5 L734.0,231.9 L737.1,229.2 L740.3,226.6 L743.4,224.0 L746.6,221.4 L749.8,218.8 L753.0,216.3 L756.3,213.7 L759.5,211.2 L762.8,208.6 L766.1,206.1 L769.4,203.6 L772.7,201.1 L776.1,198.7 L779.4,196.2 L782.8,193.8 L786.2,191.4 L789.6,189.0 L793.0,186.6 L796.4,184.3 L799.8,182.0 L803.2,179.7 L806.6,177.4 L810.0,175.2 L813.4,173.0 L816.8,170.8 L820.2,168.7 L823.6,166.6 L827.0,164.5 L830.4,162.4 L833.8,160.4 L837.1,158.5 L840.5,156.5 L843.8,154.6 L847.2,152.8 L850.5,151.0 L853.9,149.3 L857.2,147.6 L860.5,145.9 L863.8,144.4 L867.0,142.8 L870.3,141.4 L873.6,140.0 L876.8,138.6 L880.1,137.3 L883.3,136.1 L886.5,135.0" fill="none" stroke="#a5ff2d" stroke-width="1.55" stroke-dasharray="1.5 2.18"/>
<path d="M745.3,316.6 L746.8,313.6 L748.3,310.7 L749.9,307.7 L751.5,304.7 L753.1,301.8 L754.8,298.8 L756.5,295.9 L758.2,292.9 L760.0,290.0 L761.8,287.0 L763.7,284.0 L765.6,281.1 L767.5,278.1 L769.4,275.2 L771.4,272.3 L773.4,269.3 L775.4,266.4 L777.5,263.4 L779.6,260.5 L781.7,257.6 L783.8,254.7 L786.0,251.7 L788.2,248.8 L790.4,245.9 L792.7,243.0 L794.9,240.1 L797.2,237.2 L799.6,234.3 L801.9,231.5 L804.3,228.6 L806.6,225.7 L809.0,222.9 L811.5,220.0 L813.9,217.2 L816.3,214.3 L818.8,211.5 L821.3,208.7 L823.8,205.9 L826.3,203.1 L828.8,200.3 L831.4,197.5 L833.9,194.8 L836.5,192.0 L839.0,189.3 L841.6,186.6 L844.2,183.9 L846.8,181.2 L849.4,178.5 L852.0,175.9 L854.6,173.3 L857.2,170.6 L859.8,168.1 L862.5,165.5 L865.1,163.0 L867.7,160.4 L870.3,158.0 L873.0,155.5 L875.6,153.1 L878.2,150.7 L880.8,148.3 L883.4,146.0 L886.1,143.7 L888.7,141.4 L891.3,139.2 L893.9,137.0 L896.5,134.9 L899.1,132.8 L901.7,130.8 L904.4,128.8 L907.0,126.9 L909.6,125.1 L912.2,123.3" fill="none" stroke="#ee82ee" stroke-width="1.55" stroke-dasharray="1.5 2.18"/>
<path d="M749.8,315.3 L748.3,312.4 L746.8,309.5 L745.4,306.5 L744.0,303.6 L742.6,300.7 L741.3,297.8 L740.0,294.9 L738.8,292.0 L737.5,289.1 L736.4,286.1 L735.2,283.2 L734.1,280.3 L733.1,277.4 L732.0,274.5 L731.1,271.6 L730.1,268.7 L729.2,265.8 L728.3,263.0 L727.5,260.1 L726.7,257.2 L726.0,254.3 L725.3,251.5 L724.6,248.6 L723.9,245.7 L723.3,242.9 L722.8,240.0 L722.3,237.2 L721.8,234.4 L721.3,231.5 L720.9,228.7 L720.5,225.9 L720.2,223.1 L719.9,220.3 L719.6,217.5 L719.3,214.8 L719.1,212.0 L719.0,209.2 L718.8,206.5 L718.7,203.8 L718.6,201.0 L718.5,198.3 L718.5,195.6 L718.5,193.0 L718.5,190.3 L718.6,187.7 L718.6,185.0 L718.7,182.4 L718.8,179.8 L718.9,177.3 L719.1,174.7 L719.2,172.2 L719.4,169.7 L719.5,167.2 L719.7,164.7 L719.9,162.3 L720.1,159.9 L720.2,157.6 L720.4,155.2 L720.6,152.9 L720.7,150.6 L720.8,148.4 L720.9,146.2 L721.0,144.1 L721.1,141.9 L721.1,139.9 L721.1,137.9 L721.0,135.9 L720.9,134.0 L720.7,132.1 L720.5,130.3 L720.1,128.6 L719.7,126.9 L719.3,125.3 L718.7,123.8 L718.0,122.3 L717.2,121.0 L716.3,119.7 L715.2,118.4 L714.0,117.3 L712.7,116.3 L711.2,115.3 L709.6,114.5 L707.7,113.7 L705.7,113.1 L703.5,112.5 L701.1,112.1 L698.5,111.7 L695.6,111.5 L692.6,111.4 L689.3,111.4 L685.8,111.5 L682.1,111.7 L678.1,112.0 L673.9,112.4 L669.5,112.9 L664.9,113.5 L660.0,114.3 L654.9,115.1 L649.6,116.0 L644.0,117.0 L638.3,118.1 L632.3,119.3 L626.2,120.6 L619.9,121.9 L613.4,123.4 L606.7,124.9 L599.9,126.5 L592.9,128.1 L585.8,129.8 L578.6,131.6 L571.2,133.5 L563.7,135.4 L556.2,137.3 L548.5,139.3 M1258.0,141.4 L1260.7,143.5 L1263.4,145.6 L1266.2,147.8 L1269.0,150.0" fill="none" stroke="#ee82ee" stroke-width="1.55" stroke-dasharray="1.5 2.18"/>
<path d="M437.5,210.0 L443.4,207.7 L449.4,205.4 L455.4,203.1 L461.4,200.8 L467.5,198.5 L473.5,196.3 L479.6,194.1 L485.8,191.9 L491.9,189.7 L498.0,187.6 L504.2,185.5 L510.3,183.4 L516.5,181.4 L522.6,179.3 L528.7,177.4 L534.8,175.4 L540.9,173.5 L547.0,171.6 L553.0,169.7 L559.0,167.9 L564.9,166.1 L570.8,164.4 L576.7,162.7 L582.5,161.1 L588.2,159.5 L593.9,157.9 L599.5,156.4 L605.0,155.0 L610.4,153.6 L615.8,152.2 L621.1,150.9 L626.3,149.7 L631.4,148.5 L636.4,147.4 L641.3,146.4 L646.1,145.4 L650.8,144.5 L655.4,143.6 L659.9,142.8 L664.3,142.1 L668.5,141.5 L672.7,140.9 L676.7,140.4 L680.6,140.0 L684.4,139.6 L688.1,139.4 L691.7,139.2 L695.1,139.1 L698.4,139.0 L701.7,139.0 L704.8,139.2 L707.8,139.4 L710.7,139.6 L713.5,140.0 L716.2,140.4 L718.8,140.9 L721.3,141.4 L723.7,142.1 L726.1,142.8 L728.3,143.6 L730.5,144.4 L732.6,145.3 L734.6,146.3 L736.6,147.4 L738.5,148.5 L740.4,149.6 L742.2,150.9 L743.9,152.2 L745.6,153.5 L747.3,154.9 L748.9,156.3 L750.4,157.9 L752.0,159.4 L753.5,161.0" fill="none" stroke="#5ad70a" stroke-width="1.55" stroke-dasharray="1.5 2.18"/>
<path d="M773.3,89.2 L786.7,80.0" stroke="#828282" stroke-width="1.39" fill="none"/>
<rect x="785.7" y="79.0" width="2.0" height="2.0" fill="#6a2390"/>
<path d="M791.6,97.3 L812.0,88.0" stroke="#828282" stroke-width="1.39" fill="none"/>
<rect x="811.0" y="87.0" width="2.0" height="2.0" fill="#6a2390"/>
<path d="M773.0,135.0 L784.0,143.0" stroke="#828282" stroke-width="1.39" fill="none"/>
<rect x="783.0" y="142.0" width="2.0" height="2.0" fill="#6a2390"/>
<path d="M670.0,142.5 L651.7,155.0" stroke="#828282" stroke-width="1.39" fill="none"/>
<rect x="650.7" y="154.0" width="2.0" height="2.0" fill="#6a2390"/>
<path d="M667.5,157.5 L650.0,166.7" stroke="#828282" stroke-width="1.39" fill="none"/>
<rect x="649.0" y="165.7" width="2.0" height="2.0" fill="#6a2390"/>
<path d="M739.0,153.0 L727.0,147.0" stroke="#828282" stroke-width="1.39" fill="none"/>
<rect x="726.0" y="146.0" width="2.0" height="2.0" fill="#6a2390"/>
<path d="M645.0,161.0 L638.0,168.0" stroke="#828282" stroke-width="1.39" fill="none"/>
<rect x="637.0" y="167.0" width="2.0" height="2.0" fill="#6a2390"/>
<path d="M861.0,97.0 L847.0,108.0" stroke="#828282" stroke-width="1.39" fill="none"/>
<rect x="846.0" y="107.0" width="2.0" height="2.0" fill="#6a2390"/>
<path d="M977.2,88.3 L981.1,111.7" stroke="#828282" stroke-width="1.39" fill="none"/>
<rect x="980.1" y="110.7" width="2.0" height="2.0" fill="#6a2390"/>
<path d="M923.3,160.0 L934.2,178.3" stroke="#828282" stroke-width="1.39" fill="none"/>
<rect x="933.2" y="177.3" width="2.0" height="2.0" fill="#6a2390"/>
<path d="M876.0,128.0 L878.0,134.0" stroke="#828282" stroke-width="1.39" fill="none"/>
<rect x="877.0" y="133.0" width="2.0" height="2.0" fill="#6a2390"/>
<path d="M1114.0,143.3 L1120.8,148.7" stroke="#828282" stroke-width="1.39" fill="none"/>
<rect x="1119.8" y="147.7" width="2.0" height="2.0" fill="#6a2390"/>
<path d="M743.0,170.0 L753.0,174.0" stroke="#828282" stroke-width="1.39" fill="none"/>
<rect x="752.0" y="173.0" width="2.0" height="2.0" fill="#6a2390"/>
<path d="M851.5,47.5 L858.3,44.5" stroke="#828282" stroke-width="1.39" fill="none"/>
<rect x="857.3" y="43.5" width="2.0" height="2.0" fill="#6a2390"/>
<path d="M804.0,181.3 L809.3,183.3" stroke="#828282" stroke-width="1.39" fill="none"/>
<rect x="808.3" y="182.3" width="2.0" height="2.0" fill="#6a2390"/>
<path d="M918.9,77.8 L921.7,77.0 L924.5,76.3 L927.4,75.8 L930.4,75.5 L933.4,75.4 L936.6,75.4 L939.9,75.5 L943.2,75.9 L946.7,76.4 L950.4,77.1 L954.1,77.9 L958.0,78.9" fill="none" stroke="#ff2000" stroke-width="1.45"/>
<rect x="956.9" y="77.8" width="2.2" height="2.2" fill="#ff6e55"/>
<path d="M940.6,94.2 L943.8,94.3 L947.0,94.5 L950.3,94.9 L953.7,95.3 L957.2,95.9" fill="none" stroke="#ff2000" stroke-width="1.45"/>
<rect x="956.1" y="94.8" width="2.2" height="2.2" fill="#ff6e55"/>
<path d="M963.3,113.1 L966.7,113.7 L970.2,114.4 L973.8,115.1 L977.4,116.0 L981.1,116.9" fill="none" stroke="#ff2000" stroke-width="1.45"/>
<rect x="980.0" y="115.8" width="2.2" height="2.2" fill="#ff6e55"/>
<path d="M1002.2,110.6 L1006.0,112.0 L1009.9,113.4 L1013.9,114.9 L1017.9,116.4 L1021.9,118.0" fill="none" stroke="#ff2000" stroke-width="1.45"/>
<rect x="1020.8" y="116.9" width="2.2" height="2.2" fill="#ff6e55"/>
<path d="M931.7,129.4 L934.4,128.7 L937.2,128.2 L940.0,127.6 L942.8,127.2 L945.6,126.8 L948.4,126.5 L951.3,126.3 L954.2,126.1" fill="none" stroke="#ff2000" stroke-width="1.45"/>
<rect x="953.1" y="125.0" width="2.2" height="2.2" fill="#ff6e55"/>
<path d="M1038.3,160.8 L1042.2,162.3 L1046.1,163.9 L1050.1,165.6 L1054.0,167.2 L1058.0,168.9 L1062.0,170.6 L1066.0,172.4 L1070.0,174.2" fill="none" stroke="#ff2000" stroke-width="1.45"/>
<rect x="1068.9" y="173.1" width="2.2" height="2.2" fill="#ff6e55"/>
<path d="M1036.7,166.7 L1040.4,168.0 L1044.1,169.3 L1047.9,170.7 L1051.6,172.1 L1055.4,173.5 L1059.2,175.0" fill="none" stroke="#ff2000" stroke-width="1.45"/>
<rect x="1058.1" y="173.9" width="2.2" height="2.2" fill="#ff6e55"/>
<path d="M990.0,179.7 L993.5,180.4 L997.0,181.1 L1000.5,181.9 L1004.0,182.8 L1007.6,183.6 L1011.2,184.6 L1014.8,185.5 L1018.4,186.5 L1022.0,187.6 L1025.7,188.7 L1029.3,189.8 L1033.0,191.0 L1036.7,192.2" fill="none" stroke="#ff2000" stroke-width="1.45"/>
<rect x="1035.6" y="191.1" width="2.2" height="2.2" fill="#ff6e55"/>
<path d="M872.5,42.5 L875.0,39.4 L877.5,36.4 L879.7,33.5 L881.7,30.8" fill="none" stroke="#ff2000" stroke-width="1.45"/>
<rect x="880.6" y="29.7" width="2.2" height="2.2" fill="#ff6e55"/>
<path d="M882.5,55.8 L884.6,53.5 L886.7,51.2 L888.7,48.9 L890.8,46.7" fill="none" stroke="#ff2000" stroke-width="1.45"/>
<rect x="889.7" y="45.6" width="2.2" height="2.2" fill="#ff6e55"/>
<path d="M842.5,62.5 L844.4,59.7 L846.2,57.0 L847.9,54.4 L849.4,52.0 L850.7,49.6 L851.7,47.5" fill="none" stroke="#ff2000" stroke-width="1.45"/>
<rect x="850.6" y="46.4" width="2.2" height="2.2" fill="#ff6e55"/>
<path d="M879.2,75.8 L881.4,73.0 L883.6,70.2 L885.8,67.4 L888.0,64.7" fill="none" stroke="#ff2000" stroke-width="1.45"/>
<rect x="886.9" y="63.6" width="2.2" height="2.2" fill="#ff6e55"/>
<path d="M815.0,104.0 L817.6,100.9 L820.3,97.7 L822.9,94.6 L825.6,91.5 L828.3,88.4 L831.0,85.2 L833.8,82.1 L836.5,79.0" fill="none" stroke="#ff2000" stroke-width="1.45"/>
<rect x="835.4" y="77.9" width="2.2" height="2.2" fill="#ff6e55"/>
<path d="M846.0,120.0 L848.5,117.5 L851.0,114.9 L853.5,112.4 L856.0,109.9 L858.5,107.5 L861.0,105.0" fill="none" stroke="#ff2000" stroke-width="1.45"/>
<rect x="859.9" y="103.9" width="2.2" height="2.2" fill="#ff6e55"/>
<path d="M815.0,139.0 L817.2,136.0 L819.3,133.0 L821.5,130.0 L823.7,127.0 L826.0,124.0 L828.2,121.0 L830.5,118.0" fill="none" stroke="#ff2000" stroke-width="1.45"/>
<rect x="829.4" y="116.9" width="2.2" height="2.2" fill="#ff6e55"/>
<path d="M847.0,142.5 L849.4,140.2 L851.8,137.8 L854.2,135.5 L856.6,133.3 L859.0,131.0" fill="none" stroke="#ff2000" stroke-width="1.45"/>
<rect x="857.9" y="129.9" width="2.2" height="2.2" fill="#ff6e55"/>
<path d="M844.0,162.0 L846.6,159.8 L849.2,157.5 L851.8,155.3 L854.4,153.2 L857.0,151.0" fill="none" stroke="#ff2000" stroke-width="1.45"/>
<rect x="855.9" y="149.9" width="2.2" height="2.2" fill="#ff6e55"/>
<path d="M795.0,159.0 L796.6,156.0 L798.3,153.0 L800.0,150.0" fill="none" stroke="#ff2000" stroke-width="1.45"/>
<rect x="798.9" y="148.9" width="2.2" height="2.2" fill="#ff6e55"/>
<path d="M774.0,173.0 L775.8,170.1 L777.7,167.2 L779.6,164.2 L781.6,161.3 L783.5,158.4 L785.5,155.5" fill="none" stroke="#ff2000" stroke-width="1.45"/>
<rect x="784.4" y="154.4" width="2.2" height="2.2" fill="#ff6e55"/>
<path d="M713.3,130.8 L711.8,129.8 L710.2,128.8 L708.4,127.9 L706.6,127.2 L704.6,126.4 L702.5,125.8" fill="none" stroke="#ff2000" stroke-width="1.45"/>
<rect x="701.4" y="124.7" width="2.2" height="2.2" fill="#ff6e55"/>
<path d="M617.5,167.2 L614.6,167.0 L611.7,166.9 L608.7,166.9 L605.6,166.9 L602.4,166.9 L599.1,167.0 L595.8,167.2" fill="none" stroke="#ff2000" stroke-width="1.45"/>
<rect x="594.7" y="166.1" width="2.2" height="2.2" fill="#ff6e55"/>
<path d="M795.0,196.5 L797.5,194.0 L799.9,191.6 L802.4,189.2 L804.9,186.7 L807.4,184.3 L810.0,181.9 L812.5,179.5" fill="none" stroke="#ff2000" stroke-width="1.45"/>
<rect x="811.4" y="178.4" width="2.2" height="2.2" fill="#ff6e55"/>
<path d="M825.5,193.5 L828.2,191.8 L830.8,190.1 L833.5,188.5" fill="none" stroke="#ff2000" stroke-width="1.45"/>
<rect x="832.4" y="187.4" width="2.2" height="2.2" fill="#ff6e55"/>
<path d="M735.0,81.7 L737.4,79.8 L739.7,78.0 L741.6,76.3 L743.3,74.7 L744.7,73.3 L745.7,71.9 L746.3,70.7 L746.5,69.7" fill="none" stroke="#ffaf0f" stroke-width="1.45"/>
<rect x="745.4" y="68.6" width="2.2" height="2.2" fill="#ff6e55"/>
<path d="M786.7,70.8 L791.2,68.2 L795.8,65.6 L800.2,63.0 L804.7,60.5 L809.0,58.0" fill="none" stroke="#ffaf0f" stroke-width="1.45"/>
<rect x="807.9" y="56.9" width="2.2" height="2.2" fill="#ff6e55"/>
<path d="M791.0,128.5 L795.2,126.9 L799.4,125.3 L803.5,123.8 L807.5,122.4 L811.5,121.0" fill="none" stroke="#ffaf0f" stroke-width="1.45"/>
<rect x="810.4" y="119.9" width="2.2" height="2.2" fill="#ff6e55"/>
<path d="M788.0,159.0 L791.5,158.1 L794.9,157.3 L798.3,156.4 L801.7,155.7 L805.0,155.0" fill="none" stroke="#ffaf0f" stroke-width="1.45"/>
<rect x="803.9" y="153.9" width="2.2" height="2.2" fill="#ff6e55"/>
<path d="M870.0,45.8 L874.4,43.4 L878.7,41.1 L882.7,39.0 L886.6,37.2 L890.2,35.7 L893.6,34.7 L896.7,34.2" fill="none" stroke="#ffaf0f" stroke-width="1.45"/>
<rect x="895.6" y="33.1" width="2.2" height="2.2" fill="#ff6e55"/>
<path d="M905.6,72.2 L908.7,73.4 L911.9,74.7 L915.1,76.2 L918.4,77.8 L921.6,79.5 L924.9,81.3 L928.3,83.3 L931.7,85.3 L935.1,87.4 L938.5,89.6 L942.0,91.9 L945.5,94.3 L949.1,96.7 L952.6,99.1 L956.2,101.6 L959.8,104.2 L963.5,106.8 L967.1,109.4 L970.7,112.1 L974.4,114.8 L978.0,117.5 L981.7,120.3 L985.4,123.0 L989.0,125.8 L992.7,128.6 L996.3,131.5 L1000.0,134.3 L1003.6,137.2 L1007.2,140.1 L1010.8,143.0" fill="none" stroke="#ffaf0f" stroke-width="1.45"/>
<rect x="1009.7" y="141.9" width="2.2" height="2.2" fill="#ff6e55"/>
<path d="M935.6,91.1 L939.0,93.4 L942.3,95.7 L945.7,98.1 L949.2,100.6 L952.6,103.1 L956.1,105.6 L959.6,108.2 L963.1,110.8 L966.6,113.4 L970.1,116.1 L973.6,118.8 L977.1,121.6 L980.6,124.3 L984.1,127.1 L987.6,129.9 L991.1,132.7 L994.6,135.6 L998.1,138.4 L1001.5,141.3 L1005.0,144.2" fill="none" stroke="#ffaf0f" stroke-width="1.45"/>
<rect x="1003.9" y="143.1" width="2.2" height="2.2" fill="#ff6e55"/>
<path d="M908.9,92.8 L911.9,93.8 L915.0,94.9 L918.0,96.1 L921.1,97.4 L924.2,98.8 L927.3,100.3 L930.4,101.9 L933.6,103.5 L936.8,105.2 L940.0,107.0" fill="none" stroke="#ffaf0f" stroke-width="1.45"/>
<rect x="938.9" y="105.9" width="2.2" height="2.2" fill="#ff6e55"/>
<path d="M583.0,249.0 L586.0,247.3 L589.0,245.7 L592.0,244.0" fill="none" stroke="#ffaf0f" stroke-width="1.45"/>
<rect x="590.9" y="242.9" width="2.2" height="2.2" fill="#ff6e55"/>
<path d="M763.0,100.2 L760.5,100.0 L757.9,99.8 L755.1,99.8 L752.1,99.9 L749.0,100.0" fill="none" stroke="#00f078" stroke-width="1.45"/>
<rect x="747.9" y="98.9" width="2.2" height="2.2" fill="#ff6e55"/>
<path d="M595.8,183.8 L591.2,185.1 L586.6,186.5 L581.9,187.9 L577.2,189.3 L572.5,190.8" fill="none" stroke="#00f078" stroke-width="1.45"/>
<rect x="571.4" y="189.7" width="2.2" height="2.2" fill="#ff6e55"/>
<path d="M744.0,219.0 L741.6,219.5 L739.2,220.0" fill="none" stroke="#00f078" stroke-width="1.45"/>
<rect x="738.1" y="218.9" width="2.2" height="2.2" fill="#ff6e55"/>
<path d="M898.3,140.0 L900.2,137.6 L902.1,135.2 L904.0,132.9 L906.0,130.6 L907.9,128.3 L909.8,126.1 L911.7,123.9" fill="none" stroke="#00f078" stroke-width="1.45"/>
<rect x="910.6" y="122.8" width="2.2" height="2.2" fill="#ff6e55"/>
<path d="M809.5,185.5 L810.1,182.7 L810.7,180.0" fill="none" stroke="#00f078" stroke-width="1.45"/>
<rect x="809.6" y="178.9" width="2.2" height="2.2" fill="#ff6e55"/>
<path d="M796.5,124.0 L799.9,120.9 L803.2,117.8 L806.6,114.7 L810.1,111.5 L813.5,108.4 L817.0,105.3 L820.5,102.2 L824.0,99.2 L827.5,96.1 L831.0,93.0" fill="none" stroke="#a5ff2d" stroke-width="1.45"/>
<rect x="829.9" y="91.9" width="2.2" height="2.2" fill="#ff6e55"/>
<path d="M886.5,135.0 L889.7,134.0 L892.9,133.0 L896.2,132.2 L899.4,131.4 L902.6,130.7 L905.8,130.0 L909.0,129.5" fill="none" stroke="#a5ff2d" stroke-width="1.45"/>
<rect x="907.9" y="128.4" width="2.2" height="2.2" fill="#ff6e55"/>
<path d="M912.2,123.3 L914.5,121.9 L916.9,120.5 L919.2,119.2 L921.5,117.9 L923.9,116.7" fill="none" stroke="#ee82ee" stroke-width="1.45"/>
<rect x="922.8" y="115.6" width="2.2" height="2.2" fill="#ff6e55"/>
<path d="M1269.0,150.0 L1271.6,152.1 L1274.2,154.2" fill="none" stroke="#ee82ee" stroke-width="1.45"/>
<rect x="1273.1" y="153.1" width="2.2" height="2.2" fill="#ff6e55"/>
<path d="M753.5,161.0 L754.6,162.3 L755.8,163.7 L756.9,165.1 L758.0,166.5" fill="none" stroke="#5ad70a" stroke-width="1.45"/>
<rect x="756.9" y="165.4" width="2.2" height="2.2" fill="#ff6e55"/>
<path d="M463.24,203.46 L461.82,204.31 L460.39,205.15 L458.94,205.99 L457.49,206.83 L456.02,207.66 L454.54,208.48 L453.06,209.29 L451.57,210.09 L450.07,210.89 L448.58,211.67 L447.08,212.44 L445.58,213.20 L444.08,213.94 L442.58,214.67 L441.09,215.39 L439.60,216.09 L438.11,216.77 L436.64,217.43 L435.17,218.08 L433.71,218.71 L432.26,219.32 L430.83,219.91 L429.40,220.48 L427.99,221.03 L426.60,221.55 L425.22,222.06 L423.86,222.54 L422.51,223.00 L421.19,223.43 L419.89,223.84 L418.60,224.23 L417.34,224.59 L416.11,224.93 L414.90,225.24 L413.71,225.52 L412.55,225.78 L411.42,226.01 L410.32,226.21 L409.25,226.39 L408.20,226.54 L407.20,226.67 L406.22,226.76 L405.28,226.83 L404.37,226.87 L403.50,226.89 L402.66,226.87 L401.87,226.83 L401.11,226.76 L400.39,226.67 L399.72,226.54 L399.08,226.39 L398.49,226.21 L397.94,226.01 L397.44,225.78 L396.99,225.52 L396.58,225.24 L396.21,224.93 L395.90,224.59 L395.64,224.23 L395.42,223.84 L395.26,223.43 L395.15,223.00 L395.09,222.54 L395.08,222.06 L395.13,221.55 L395.23,221.03 L395.39,220.48 L395.60,219.91 L395.86,219.32 L396.18,218.71 L396.56,218.08 L397.00,217.43 L397.49,216.77 L398.03,216.09 L398.63,215.39 L399.29,214.67 L400.01,213.94 L400.78,213.20 L401.61,212.44 L402.49,211.67 L403.42,210.89 L404.41,210.09 L405.45,209.29 L406.55,208.48 L407.70,207.66 L408.89,206.83 L410.14,205.99 L411.43,205.15 L412.77,204.31 L414.16,203.46 L415.59,202.61 L417.06,201.75 L418.57,200.90 L420.12,200.05 L421.70,199.20 L423.33,198.35 L424.98,197.50 L426.66,196.66 L428.37,195.83 L430.11,195.00 L431.87,194.18 L433.65,193.37 L435.45,192.56 L437.26,191.77 L439.09,190.99 L440.92,190.23 L442.76,189.48 L444.61,188.74 L446.45,188.02 L448.30,187.32 L450.13,186.63 L451.96,185.97 L453.78,185.32 L455.58,184.70 L457.37,184.10 L459.14,183.52 L460.88,182.96 L462.59,182.43 L464.28,181.93 L465.93,181.45 L467.55,181.00 L469.13,180.58 L470.67,180.18 L472.17,179.82 L473.62,179.48 L475.03,179.18 L476.38,178.90 L477.68,178.66 L478.93,178.44 L480.12,178.27 L481.26,178.12 L482.33,178.00 L483.34,177.92 L484.29,177.87 L485.18,177.85 L486.00,177.87 L486.75,177.92 L487.44,178.00 L488.06,178.12 L488.61,178.27 L489.10,178.44 L489.51,178.66 L489.86,178.90 L490.14,179.18 L490.35,179.48 L490.50,179.82 L490.57,180.18 L490.58,180.58 L490.53,181.00 L490.40,181.45 L490.22,181.93 L489.97,182.43 L489.66,182.96 L489.28,183.52 L488.85,184.10 L488.36,184.70 L487.81,185.32 L487.21,185.97 L486.55,186.63 L485.84,187.32 L485.08,188.02 L484.27,188.74 L483.41,189.48 L482.51,190.23 L481.56,190.99 L480.57,191.77 L479.54,192.56 L478.47,193.37 L477.36,194.18 L476.22,195.00 L475.04,195.83 L473.84,196.66 L472.60,197.50 L471.33,198.35 L470.04,199.20 L468.72,200.05 L467.38,200.90 L466.02,201.75 L464.64,202.61 L463.24,203.46 Z" fill="none" stroke="#5ad70a" stroke-width="2.08"/>
<path d="M598.59,264.12 L598.16,264.97 L597.71,265.82 L597.23,266.67 L596.74,267.51 L596.22,268.35 L595.68,269.18 L595.12,270.00 L594.55,270.82 L593.95,271.63 L593.34,272.42 L592.70,273.21 L592.05,273.99 L591.39,274.75 L590.70,275.50 L590.01,276.23 L589.29,276.95 L588.56,277.65 L587.82,278.34 L587.07,279.01 L586.30,279.66 L585.52,280.29 L584.72,280.90 L583.92,281.49 L583.11,282.06 L582.28,282.60 L581.45,283.13 L580.61,283.63 L579.76,284.11 L578.90,284.56 L578.04,284.99 L577.17,285.39 L576.30,285.77 L575.42,286.12 L574.54,286.45 L573.66,286.74 L572.78,287.01 L571.89,287.26 L571.01,287.47 L570.13,287.66 L569.25,287.82 L568.37,287.95 L567.49,288.05 L566.62,288.12 L565.76,288.16 L564.90,288.18 L564.05,288.16 L563.21,288.12 L562.38,288.05 L561.56,287.95 L560.76,287.82 L559.96,287.66 L559.18,287.47 L558.42,287.26 L557.67,287.01 L556.94,286.74 L556.23,286.45 L555.53,286.12 L554.86,285.77 L554.21,285.39 L553.58,284.99 L552.98,284.56 L552.40,284.11 L551.85,283.63 L551.32,283.13 L550.82,282.60 L550.36,282.06 L549.92,281.49 L549.51,280.90 L549.13,280.29 L548.79,279.66 L548.48,279.01 L548.20,278.34 L547.96,277.65 L547.75,276.95 L547.58,276.23 L547.45,275.50 L547.35,274.75 L547.29,273.99 L547.27,273.21 L547.28,272.42 L547.34,271.63 L547.43,270.82 L547.56,270.00 L547.73,269.18 L547.94,268.35 L548.19,267.51 L548.48,266.67 L548.80,265.82 L549.16,264.97 L549.56,264.12 L550.00,263.26 L550.47,262.41 L550.98,261.56 L551.53,260.71 L552.11,259.86 L552.72,259.02 L553.37,258.18 L554.05,257.35 L554.76,256.52 L555.50,255.70 L556.27,254.90 L557.07,254.10 L557.89,253.31 L558.74,252.54 L559.61,251.78 L560.50,251.03 L561.42,250.30 L562.35,249.58 L563.31,248.88 L564.28,248.20 L565.26,247.54 L566.26,246.90 L567.27,246.28 L568.28,245.68 L569.31,245.10 L570.35,244.54 L571.38,244.01 L572.43,243.50 L573.47,243.02 L574.52,242.56 L575.56,242.13 L576.60,241.73 L577.63,241.35 L578.66,241.01 L579.68,240.69 L580.69,240.40 L581.69,240.14 L582.68,239.90 L583.65,239.70 L584.61,239.53 L585.55,239.39 L586.48,239.28 L587.38,239.21 L588.27,239.16 L589.13,239.14 L589.97,239.16 L590.79,239.21 L591.59,239.28 L592.35,239.39 L593.10,239.53 L593.82,239.70 L594.50,239.90 L595.17,240.14 L595.80,240.40 L596.40,240.69 L596.98,241.01 L597.52,241.35 L598.04,241.73 L598.52,242.13 L598.98,242.56 L599.40,243.02 L599.79,243.50 L600.15,244.01 L600.48,244.54 L600.77,245.10 L601.04,245.68 L601.27,246.28 L601.48,246.90 L601.65,247.54 L601.79,248.20 L601.90,248.88 L601.98,249.58 L602.03,250.30 L602.05,251.03 L602.04,251.78 L602.00,252.54 L601.93,253.31 L601.84,254.10 L601.71,254.90 L601.56,255.70 L601.38,256.52 L601.17,257.35 L600.94,258.18 L600.68,259.02 L600.39,259.86 L600.08,260.71 L599.74,261.56 L599.38,262.41 L599.00,263.26 L598.59,264.12 Z" fill="none" stroke="#ffaf0f" stroke-width="2.08"/>
<path d="M742.99,237.11 L742.61,237.96 L742.21,238.81 L741.78,239.65 L741.33,240.49 L740.85,241.33 L740.35,242.15 L739.83,242.97 L739.29,243.79 L738.72,244.59 L738.13,245.38 L737.52,246.16 L736.90,246.93 L736.25,247.68 L735.58,248.42 L734.90,249.15 L734.19,249.86 L733.48,250.56 L732.74,251.23 L731.99,251.89 L731.23,252.53 L730.45,253.16 L729.65,253.76 L728.85,254.34 L728.03,254.90 L727.21,255.44 L726.37,255.95 L725.52,256.45 L724.67,256.92 L723.81,257.36 L722.94,257.78 L722.06,258.18 L721.18,258.55 L720.30,258.89 L719.41,259.21 L718.52,259.50 L717.63,259.77 L716.74,260.01 L715.85,260.22 L714.96,260.40 L714.08,260.56 L713.20,260.68 L712.32,260.78 L711.45,260.85 L710.58,260.90 L709.73,260.91 L708.88,260.90 L708.04,260.85 L707.21,260.78 L706.39,260.68 L705.59,260.56 L704.80,260.40 L704.02,260.22 L703.26,260.01 L702.52,259.77 L701.80,259.50 L701.09,259.21 L700.41,258.89 L699.74,258.55 L699.10,258.18 L698.48,257.78 L697.88,257.36 L697.31,256.92 L696.76,256.45 L696.24,255.95 L695.75,255.44 L695.28,254.90 L694.84,254.34 L694.43,253.76 L694.06,253.16 L693.71,252.53 L693.40,251.89 L693.11,251.23 L692.86,250.56 L692.65,249.86 L692.46,249.15 L692.31,248.42 L692.20,247.68 L692.12,246.93 L692.08,246.16 L692.07,245.38 L692.10,244.59 L692.16,243.79 L692.26,242.97 L692.39,242.15 L692.56,241.33 L692.77,240.49 L693.01,239.65 L693.29,238.81 L693.60,237.96 L693.95,237.11 L694.33,236.26 L694.74,235.40 L695.19,234.55 L695.68,233.70 L696.19,232.85 L696.74,232.00 L697.31,231.16 L697.92,230.33 L698.56,229.50 L699.22,228.67 L699.92,227.86 L700.64,227.06 L701.38,226.27 L702.15,225.48 L702.94,224.72 L703.75,223.96 L704.59,223.22 L705.44,222.50 L706.31,221.79 L707.20,221.10 L708.11,220.43 L709.03,219.78 L709.96,219.15 L710.90,218.54 L711.86,217.95 L712.82,217.38 L713.79,216.84 L714.76,216.32 L715.74,215.83 L716.72,215.37 L717.71,214.93 L718.69,214.52 L719.67,214.13 L720.65,213.78 L721.62,213.45 L722.59,213.16 L723.55,212.89 L724.51,212.66 L725.45,212.45 L726.39,212.28 L727.31,212.13 L728.22,212.02 L729.11,211.94 L729.99,211.89 L730.85,211.88 L731.69,211.89 L732.52,211.94 L733.33,212.02 L734.11,212.13 L734.88,212.28 L735.62,212.45 L736.34,212.66 L737.03,212.89 L737.70,213.16 L738.35,213.45 L738.97,213.78 L739.56,214.13 L740.13,214.52 L740.67,214.93 L741.19,215.37 L741.67,215.83 L742.13,216.32 L742.56,216.84 L742.95,217.38 L743.32,217.95 L743.66,218.54 L743.98,219.15 L744.26,219.78 L744.51,220.43 L744.73,221.10 L744.92,221.79 L745.08,222.50 L745.21,223.22 L745.31,223.96 L745.39,224.72 L745.43,225.48 L745.44,226.27 L745.42,227.06 L745.37,227.86 L745.30,228.67 L745.19,229.50 L745.06,230.33 L744.90,231.16 L744.71,232.00 L744.49,232.85 L744.24,233.70 L743.97,234.55 L743.67,235.40 L743.34,236.26 L742.99,237.11 Z" fill="none" stroke="#a5ff2d" stroke-width="2.08"/>
<path d="M771.78,270.19 L771.59,271.04 L771.38,271.89 L771.14,272.74 L770.88,273.58 L770.59,274.42 L770.27,275.26 L769.93,276.08 L769.56,276.90 L769.17,277.71 L768.76,278.51 L768.32,279.29 L767.85,280.07 L767.37,280.83 L766.86,281.58 L766.33,282.32 L765.78,283.04 L765.21,283.74 L764.62,284.43 L764.01,285.10 L763.38,285.75 L762.74,286.39 L762.07,287.00 L761.39,287.59 L760.69,288.16 L759.97,288.71 L759.25,289.24 L758.50,289.74 L757.74,290.22 L756.97,290.68 L756.19,291.11 L755.40,291.51 L754.60,291.89 L753.78,292.24 L752.96,292.57 L752.13,292.87 L751.30,293.14 L750.46,293.38 L749.61,293.60 L748.76,293.78 L747.90,293.94 L747.05,294.07 L746.19,294.18 L745.33,294.25 L744.48,294.29 L743.62,294.31 L742.77,294.29 L741.92,294.25 L741.08,294.18 L740.25,294.07 L739.42,293.94 L738.59,293.78 L737.78,293.60 L736.98,293.38 L736.19,293.14 L735.41,292.87 L734.64,292.57 L733.89,292.24 L733.16,291.89 L732.44,291.51 L731.73,291.11 L731.05,290.68 L730.39,290.22 L729.74,289.74 L729.12,289.24 L728.52,288.71 L727.94,288.16 L727.39,287.59 L726.86,287.00 L726.35,286.39 L725.88,285.75 L725.43,285.10 L725.00,284.43 L724.61,283.74 L724.25,283.04 L723.91,282.32 L723.61,281.58 L723.33,280.83 L723.09,280.07 L722.88,279.29 L722.70,278.51 L722.56,277.71 L722.45,276.90 L722.37,276.08 L722.32,275.26 L722.31,274.42 L722.33,273.58 L722.39,272.74 L722.48,271.89 L722.60,271.04 L722.75,270.19 L722.94,269.34 L723.17,268.48 L723.42,267.63 L723.71,266.78 L724.03,265.94 L724.38,265.09 L724.76,264.26 L725.18,263.42 L725.62,262.60 L726.09,261.78 L726.59,260.98 L727.12,260.18 L727.68,259.40 L728.26,258.62 L728.87,257.86 L729.51,257.12 L730.16,256.39 L730.84,255.67 L731.54,254.98 L732.26,254.30 L733.01,253.64 L733.77,253.00 L734.54,252.38 L735.34,251.78 L736.14,251.20 L736.97,250.65 L737.80,250.12 L738.65,249.61 L739.51,249.13 L740.37,248.68 L741.24,248.25 L742.12,247.85 L743.01,247.47 L743.90,247.13 L744.79,246.81 L745.69,246.52 L746.58,246.26 L747.48,246.03 L748.37,245.83 L749.26,245.66 L750.14,245.52 L751.02,245.41 L751.90,245.34 L752.76,245.29 L753.62,245.27 L754.47,245.29 L755.31,245.34 L756.13,245.41 L756.95,245.52 L757.75,245.66 L758.53,245.83 L759.30,246.03 L760.06,246.26 L760.80,246.52 L761.52,246.81 L762.22,247.13 L762.90,247.47 L763.57,247.85 L764.21,248.25 L764.83,248.68 L765.43,249.13 L766.01,249.61 L766.57,250.12 L767.10,250.65 L767.61,251.20 L768.09,251.78 L768.55,252.38 L768.99,253.00 L769.39,253.64 L769.78,254.30 L770.14,254.98 L770.47,255.67 L770.77,256.39 L771.05,257.12 L771.30,257.86 L771.53,258.62 L771.72,259.40 L771.89,260.18 L772.04,260.98 L772.15,261.78 L772.24,262.60 L772.30,263.42 L772.33,264.26 L772.33,265.09 L772.31,265.94 L772.26,266.78 L772.18,267.63 L772.07,268.48 L771.94,269.34 L771.78,270.19 Z" fill="none" stroke="#ff2000" stroke-width="2.08"/>
<path d="M777.30,320.61 L777.30,321.47 L777.27,322.32 L777.22,323.17 L777.14,324.02 L777.03,324.86 L776.89,325.70 L776.73,326.53 L776.54,327.36 L776.32,328.17 L776.08,328.98 L775.82,329.78 L775.52,330.57 L775.20,331.34 L774.86,332.11 L774.49,332.85 L774.10,333.59 L773.68,334.31 L773.24,335.01 L772.77,335.69 L772.29,336.36 L771.78,337.01 L771.24,337.63 L770.69,338.24 L770.11,338.83 L769.52,339.39 L768.90,339.93 L768.27,340.45 L767.62,340.94 L766.94,341.41 L766.26,341.85 L765.55,342.27 L764.83,342.66 L764.09,343.03 L763.34,343.36 L762.58,343.67 L761.80,343.95 L761.02,344.20 L760.22,344.43 L759.41,344.62 L758.59,344.79 L757.76,344.92 L756.92,345.03 L756.08,345.10 L755.24,345.15 L754.38,345.16 L753.53,345.15 L752.67,345.10 L751.81,345.03 L750.96,344.92 L750.10,344.79 L749.24,344.62 L748.39,344.43 L747.54,344.20 L746.69,343.95 L745.86,343.67 L745.03,343.36 L744.20,343.03 L743.39,342.66 L742.59,342.27 L741.80,341.85 L741.02,341.41 L740.26,340.94 L739.51,340.45 L738.78,339.93 L738.06,339.39 L737.36,338.83 L736.69,338.24 L736.03,337.63 L735.39,337.01 L734.78,336.36 L734.19,335.69 L733.62,335.01 L733.08,334.31 L732.56,333.59 L732.07,332.85 L731.61,332.11 L731.17,331.34 L730.76,330.57 L730.38,329.78 L730.04,328.98 L729.72,328.17 L729.43,327.36 L729.17,326.53 L728.95,325.70 L728.76,324.86 L728.60,324.02 L728.47,323.17 L728.38,322.32 L728.31,321.47 L728.28,320.61 L728.29,319.76 L728.32,318.91 L728.39,318.06 L728.50,317.21 L728.63,316.37 L728.80,315.53 L729.00,314.70 L729.23,313.88 L729.49,313.06 L729.79,312.25 L730.11,311.46 L730.47,310.67 L730.85,309.90 L731.27,309.14 L731.71,308.39 L732.18,307.66 L732.67,306.94 L733.19,306.24 L733.74,305.56 L734.31,304.89 L734.91,304.25 L735.53,303.62 L736.16,303.02 L736.83,302.43 L737.51,301.87 L738.20,301.33 L738.92,300.82 L739.66,300.33 L740.40,299.86 L741.17,299.42 L741.95,299.00 L742.74,298.62 L743.54,298.25 L744.35,297.92 L745.17,297.61 L746.00,297.33 L746.84,297.08 L747.68,296.86 L748.53,296.67 L749.38,296.50 L750.23,296.37 L751.09,296.26 L751.95,296.19 L752.80,296.14 L753.66,296.13 L754.51,296.14 L755.36,296.19 L756.20,296.26 L757.04,296.37 L757.87,296.50 L758.69,296.67 L759.51,296.86 L760.31,297.08 L761.11,297.33 L761.90,297.61 L762.67,297.92 L763.43,298.25 L764.18,298.62 L764.91,299.00 L765.63,299.42 L766.33,299.86 L767.01,300.33 L767.68,300.82 L768.33,301.33 L768.96,301.87 L769.57,302.43 L770.17,303.02 L770.74,303.62 L771.29,304.25 L771.82,304.89 L772.33,305.56 L772.81,306.24 L773.27,306.94 L773.71,307.66 L774.13,308.39 L774.52,309.14 L774.89,309.90 L775.23,310.67 L775.54,311.46 L775.84,312.25 L776.10,313.06 L776.34,313.88 L776.55,314.70 L776.74,315.53 L776.90,316.37 L777.04,317.21 L777.14,318.06 L777.22,318.91 L777.28,319.76 L777.30,320.61 Z" fill="none" stroke="#ee82ee" stroke-width="2.08"/>
<path d="M864.57,238.85 L864.44,239.70 L864.28,240.55 L864.09,241.39 L863.87,242.23 L863.63,243.07 L863.36,243.89 L863.06,244.71 L862.73,245.53 L862.38,246.33 L862.00,247.12 L861.59,247.90 L861.16,248.67 L860.71,249.42 L860.23,250.17 L859.73,250.89 L859.20,251.60 L858.65,252.30 L858.08,252.98 L857.49,253.64 L856.88,254.28 L856.24,254.90 L855.59,255.51 L854.92,256.09 L854.24,256.65 L853.53,257.19 L852.81,257.70 L852.07,258.20 L851.32,258.67 L850.56,259.11 L849.78,259.54 L849.00,259.93 L848.20,260.30 L847.39,260.65 L846.57,260.97 L845.74,261.26 L844.91,261.52 L844.07,261.76 L843.22,261.97 L842.37,262.16 L841.52,262.31 L840.66,262.44 L839.81,262.54 L838.95,262.61 L838.09,262.65 L837.24,262.67 L836.39,262.65 L835.54,262.61 L834.70,262.54 L833.86,262.44 L833.03,262.31 L832.21,262.16 L831.39,261.97 L830.59,261.76 L829.80,261.52 L829.02,261.26 L828.25,260.97 L827.50,260.65 L826.76,260.30 L826.03,259.93 L825.32,259.54 L824.64,259.11 L823.96,258.67 L823.31,258.20 L822.68,257.70 L822.07,257.19 L821.48,256.65 L820.92,256.09 L820.37,255.51 L819.86,254.90 L819.36,254.28 L818.90,253.64 L818.45,252.98 L818.04,252.30 L817.65,251.60 L817.29,250.89 L816.96,250.17 L816.66,249.42 L816.39,248.67 L816.15,247.90 L815.93,247.12 L815.75,246.33 L815.60,245.53 L815.48,244.71 L815.40,243.89 L815.34,243.07 L815.31,242.23 L815.32,241.39 L815.36,240.55 L815.43,239.70 L815.53,238.85 L815.66,237.99 L815.83,237.14 L816.02,236.29 L816.25,235.44 L816.51,234.59 L816.80,233.74 L817.11,232.90 L817.46,232.07 L817.84,231.24 L818.24,230.41 L818.67,229.60 L819.13,228.80 L819.62,228.01 L820.13,227.23 L820.67,226.46 L821.23,225.70 L821.82,224.96 L822.43,224.24 L823.06,223.53 L823.71,222.84 L824.39,222.17 L825.08,221.52 L825.79,220.89 L826.52,220.28 L827.27,219.70 L828.03,219.13 L828.81,218.59 L829.60,218.07 L830.40,217.58 L831.21,217.12 L832.04,216.68 L832.87,216.27 L833.71,215.89 L834.56,215.53 L835.41,215.21 L836.27,214.91 L837.14,214.65 L838.00,214.41 L838.87,214.21 L839.74,214.03 L840.61,213.89 L841.48,213.78 L842.34,213.70 L843.20,213.65 L844.06,213.63 L844.91,213.65 L845.75,213.70 L846.59,213.78 L847.41,213.89 L848.23,214.03 L849.04,214.21 L849.83,214.41 L850.62,214.65 L851.39,214.91 L852.14,215.21 L852.88,215.53 L853.61,215.89 L854.31,216.27 L855.00,216.68 L855.67,217.12 L856.33,217.58 L856.96,218.07 L857.57,218.59 L858.17,219.13 L858.74,219.70 L859.28,220.28 L859.81,220.89 L860.31,221.52 L860.79,222.17 L861.24,222.84 L861.67,223.53 L862.07,224.24 L862.44,224.96 L862.79,225.70 L863.11,226.46 L863.41,227.23 L863.68,228.01 L863.92,228.80 L864.13,229.60 L864.31,230.41 L864.47,231.24 L864.60,232.07 L864.69,232.90 L864.76,233.74 L864.80,234.59 L864.82,235.44 L864.80,236.29 L864.75,237.14 L864.68,237.99 L864.57,238.85 Z" fill="none" stroke="#00f078" stroke-width="2.08"/>
<g stroke="#ff0000" stroke-width="1.3" fill="none">
<path d="M729.4,260.8 h7 M732.9,257.3 v7"/>
<path d="M740.1,254.0 h7 M743.6,250.5 v7"/>
<path d="M756.1,261.1 h7 M759.6,257.6 v7"/>
<path d="M758.7,270.5 h7 M762.2,267.0 v7"/>
<path d="M733.8,270.0 h7 M737.3,266.5 v7"/>
<path d="M740.1,262.0 h7 M743.6,258.5 v7"/>
<path d="M743.6,257.6 h7 M747.1,254.1 v7"/>
<path d="M745.4,264.7 h7 M748.9,261.2 v7"/>
<path d="M748.9,259.3 h7 M752.4,255.8 v7"/>
<path d="M737.5,258.0 h7 M741.0,254.5 v7"/>
<path d="M742.5,266.5 h7 M746.0,263.0 v7"/>
<path d="M747.0,262.0 h7 M750.5,258.5 v7"/>
<path d="M560.7,266.7 h7 M564.2,263.2 v7"/>
<path d="M562.7,266.0 h7 M566.2,262.5 v7"/>
<path d="M570.7,258.3 h7 M574.2,254.8 v7"/>
<path d="M579.8,267.5 h7 M583.3,264.0 v7"/>
<path d="M589.8,265.3 h7 M593.3,261.8 v7"/>
<path d="M702.4,235.9 h7 M705.9,232.4 v7"/>
<path d="M721.4,239.8 h7 M724.9,236.3 v7"/>
<path d="M741.8,316.6 h7 M745.3,313.1 v7"/>
<path d="M746.3,315.3 h7 M749.8,311.8 v7"/>
<path d="M842.8,217.0 h7 M846.3,213.5 v7"/>
<path d="M842.8,221.1 h7 M846.3,217.6 v7"/>
<path d="M832.1,231.2 h7 M835.6,227.7 v7"/>
<path d="M818.8,246.5 h7 M822.3,243.0 v7"/>
<path d="M802.6,237.5 h7 M806.1,234.0 v7"/>
<path d="M434.0,210.0 h7 M437.5,206.5 v7"/>
</g>
<g font-size="10.4" fill="#fff" text-anchor="middle" stroke="#000" stroke-width="3" paint-order="stroke" stroke-linejoin="round">
<text x="440.5" y="205.6">LMI</text>
<text x="574.3" y="266.9">ORI</text>
<text x="718.8" y="239.6">CTA</text>
<text x="747.3" y="273.0">STA</text>
<text x="752.8" y="323.8">OER</text>
<text x="840.1" y="241.4">AND</text>
</g>
<g class="mono" font-size="13.95" fill="#fff">
<text class="mono" x="303.7" y="22.00" textLength="50.2" lengthAdjust="spacing">RU0018</text>
<text class="mono" x="303.7" y="35.27" textLength="317.7" lengthAdjust="spacing">Beg: 20251029 16:46:57 (sol = 216.17°)</text>
<text class="mono" x="303.7" y="48.54" textLength="317.7" lengthAdjust="spacing">End: 20251030 00:53:30 (sol = 216.50°)</text>
<text class="mono" x="303.7" y="60.21" textLength="317.7" lengthAdjust="spacing">--------------------------------------</text>
<text class="mono" x="303.7" y="75.08" textLength="58.5" lengthAdjust="spacing">STA: 23</text>
<text class="mono" x="303.7" y="88.35" textLength="58.5" lengthAdjust="spacing">...: 20</text>
<text class="mono" x="303.7" y="101.62" textLength="58.5" lengthAdjust="spacing">ORI: 10</text>
<text class="mono" x="303.7" y="114.89" textLength="50.2" lengthAdjust="spacing">AND: 5</text>
<text class="mono" x="303.7" y="128.16" textLength="50.2" lengthAdjust="spacing">CTA: 2</text>
<text class="mono" x="303.7" y="141.43" textLength="50.2" lengthAdjust="spacing">OER: 2</text>
<text class="mono" x="303.7" y="154.70" textLength="50.2" lengthAdjust="spacing">LMI: 1</text>
</g>
<g stroke="#e6e6e6" stroke-opacity="0.55" stroke-width="2.08" stroke-dasharray="2.08 3.44" fill="none">
<path d="M74.00,842.3 V640.5"/>
<path d="M218.00,842.3 V640.5"/>
<path d="M364.00,842.3 V640.5"/>
<path d="M504.00,842.3 V640.5"/>
<path d="M649.00,842.3 V640.5"/>
<path d="M795.00,842.3 V640.5"/>
<path d="M938.00,842.3 V640.5"/>
<path d="M1089.00,842.3 V640.5"/>
<path d="M1237.00,842.3 V640.5"/>
<path d="M1390.75,842.3 V640.5"/>
<path d="M1545.00,842.3 V640.5"/>
<path d="M1684.00,842.3 V640.5"/>
</g>
<g fill="#5a5a5a" font-size="31.5">
<text transform="translate(150.0,692.5) rotate(-90)" textLength="52.8" lengthAdjust="spacingAndGlyphs">APR</text>
<text transform="translate(293.8,699.0) rotate(-90)" textLength="59.3" lengthAdjust="spacingAndGlyphs">MAY</text>
<text transform="translate(436.0,689.0) rotate(-90)" textLength="49.3" lengthAdjust="spacingAndGlyphs">JUN</text>
<text transform="translate(575.0,682.5) rotate(-90)" textLength="44.8" lengthAdjust="spacingAndGlyphs">JUL</text>
<text transform="translate(722.5,699.0) rotate(-90)" textLength="58.3" lengthAdjust="spacingAndGlyphs">AUG</text>
<text transform="translate(870.0,690.2) rotate(-90)" textLength="49.5" lengthAdjust="spacingAndGlyphs">SEP</text>
<text transform="translate(1014.5,696.5) rotate(-90)" textLength="56.8" lengthAdjust="spacingAndGlyphs">OCT</text>
<text transform="translate(1167.5,700.2) rotate(-90)" textLength="59.0" lengthAdjust="spacingAndGlyphs">NOV</text>
<text transform="translate(1317.0,697.5) rotate(-90)" textLength="54.8" lengthAdjust="spacingAndGlyphs">DEC</text>
<text transform="translate(1466.0,684.0) rotate(-90)" textLength="44.8" lengthAdjust="spacingAndGlyphs">JAN</text>
<text transform="translate(1625.5,691.5) rotate(-90)" textLength="48.8" lengthAdjust="spacingAndGlyphs">FEB</text>
<text transform="translate(1762.5,702.0) rotate(-90)" textLength="59.8" lengthAdjust="spacingAndGlyphs">MAR</text>
</g>
<g stroke="#ff0000" stroke-width="1.39" stroke-dasharray="5.14 2.22" fill="none">
<path d="M1077.3,842.3 V638.2"/>
<path d="M1079.4,842.3 V638.2"/>
</g>
<rect x="106.0" y="832.0" width="23.0" height="4" fill="#ee82ee"/>
<rect x="164.0" y="832.0" width="180.0" height="4" fill="#ee82ee"/>
<rect x="365.0" y="832.0" width="258.0" height="4" fill="#ee82ee"/>
<rect x="634.0" y="832.0" width="151.0" height="4" fill="#ee82ee"/>
<rect x="805.0" y="832.0" width="93.0" height="4" fill="#ee82ee"/>
<rect x="918.0" y="832.0" width="53.0" height="4" fill="#ee82ee"/>
<rect x="982.0" y="832.0" width="82.0" height="4" fill="#ee82ee"/>
<rect x="1080.0" y="832.0" width="121.0" height="4" fill="#ee82ee"/>
<rect x="1241.0" y="832.0" width="82.0" height="4" fill="#ee82ee"/>
<rect x="1334.0" y="832.0" width="19.0" height="4" fill="#ee82ee"/>
<rect x="1378.0" y="832.0" width="63.0" height="4" fill="#ee82ee"/>
<rect x="1456.0" y="832.0" width="53.0" height="4" fill="#ee82ee"/>
<rect x="1520.0" y="832.0" width="24.0" height="4" fill="#ee82ee"/>
<rect x="1721.0" y="832.0" width="23.0" height="4" fill="#ee82ee"/>
<rect x="1755.0" y="832.0" width="24.0" height="4" fill="#ee82ee"/>
<rect x="164.0" y="816.0" width="24.0" height="4" fill="#e01af0"/>
<rect x="223.0" y="816.0" width="63.0" height="4" fill="#e01af0"/>
<rect x="311.0" y="816.0" width="29.0" height="4" fill="#e01af0"/>
<rect x="365.0" y="816.0" width="126.0" height="4" fill="#e01af0"/>
<rect x="507.0" y="816.0" width="146.0" height="4" fill="#e01af0"/>
<rect x="703.0" y="816.0" width="33.0" height="4" fill="#e01af0"/>
<rect x="771.0" y="816.0" width="73.0" height="4" fill="#e01af0"/>
<rect x="869.0" y="816.0" width="117.0" height="4" fill="#e01af0"/>
<rect x="1001.0" y="816.0" width="14.0" height="4" fill="#e01af0"/>
<rect x="1060.0" y="816.0" width="151.0" height="4" fill="#e01af0"/>
<rect x="1241.0" y="816.0" width="24.0" height="4" fill="#e01af0"/>
<rect x="1290.0" y="816.0" width="24.0" height="4" fill="#e01af0"/>
<rect x="1339.0" y="816.0" width="24.0" height="4" fill="#e01af0"/>
<rect x="1383.0" y="816.0" width="43.0" height="4" fill="#e01af0"/>
<rect x="1456.0" y="816.0" width="24.0" height="4" fill="#e01af0"/>
<rect x="1545.0" y="816.0" width="23.0" height="4" fill="#e01af0"/>
<rect x="164.0" y="800.0" width="24.0" height="4" fill="#ff2000"/>
<rect x="257.0" y="800.0" width="229.0" height="4" fill="#ff2000"/>
<rect x="507.0" y="800.0" width="107.0" height="4" fill="#ff2000"/>
<rect x="624.0" y="800.0" width="92.0" height="4" fill="#ff2000"/>
<rect x="727.0" y="800.0" width="97.0" height="4" fill="#ff2000"/>
<rect x="947.0" y="800.0" width="200.0" height="4" fill="#ff2000"/>
<rect x="1158.0" y="800.0" width="87.0" height="4" fill="#ff2000"/>
<rect x="1256.0" y="800.0" width="185.0" height="4" fill="#ff2000"/>
<rect x="1456.0" y="800.0" width="24.0" height="4" fill="#ff2000"/>
<rect x="1549.0" y="800.0" width="24.0" height="4" fill="#ff2000"/>
<rect x="194.0" y="784.0" width="23.0" height="4" fill="#ffaf0f"/>
<rect x="321.0" y="784.0" width="185.0" height="4" fill="#ffaf0f"/>
<rect x="517.0" y="784.0" width="23.0" height="4" fill="#ffaf0f"/>
<rect x="556.0" y="784.0" width="126.0" height="4" fill="#ffaf0f"/>
<rect x="805.0" y="784.0" width="24.0" height="4" fill="#ffaf0f"/>
<rect x="952.0" y="784.0" width="19.0" height="4" fill="#ffaf0f"/>
<rect x="987.0" y="784.0" width="136.0" height="4" fill="#ffaf0f"/>
<rect x="1153.0" y="784.0" width="63.0" height="4" fill="#ffaf0f"/>
<rect x="1241.0" y="784.0" width="24.0" height="4" fill="#ffaf0f"/>
<rect x="1315.0" y="784.0" width="23.0" height="4" fill="#ffaf0f"/>
<rect x="1393.0" y="784.0" width="23.0" height="4" fill="#ffaf0f"/>
<rect x="1461.0" y="784.0" width="185.0" height="4" fill="#ffaf0f"/>
<rect x="340.0" y="768.0" width="29.0" height="4" fill="#fff000"/>
<rect x="409.0" y="768.0" width="38.0" height="4" fill="#fff000"/>
<rect x="468.0" y="768.0" width="23.0" height="4" fill="#fff000"/>
<rect x="526.0" y="768.0" width="19.0" height="4" fill="#fff000"/>
<rect x="561.0" y="768.0" width="28.0" height="4" fill="#fff000"/>
<rect x="615.0" y="768.0" width="33.0" height="4" fill="#fff000"/>
<rect x="957.0" y="768.0" width="29.0" height="4" fill="#fff000"/>
<rect x="1060.0" y="768.0" width="24.0" height="4" fill="#fff000"/>
<rect x="1099.0" y="768.0" width="24.0" height="4" fill="#fff000"/>
<rect x="1158.0" y="768.0" width="33.0" height="4" fill="#fff000"/>
<rect x="1246.0" y="768.0" width="24.0" height="4" fill="#fff000"/>
<rect x="1422.0" y="768.0" width="87.0" height="4" fill="#fff000"/>
<rect x="419.0" y="752.0" width="23.0" height="4" fill="#a5ff2d"/>
<rect x="531.0" y="752.0" width="24.0" height="4" fill="#a5ff2d"/>
<rect x="566.0" y="752.0" width="23.0" height="4" fill="#a5ff2d"/>
<rect x="619.0" y="752.0" width="122.0" height="4" fill="#a5ff2d"/>
<rect x="967.0" y="752.0" width="166.0" height="4" fill="#a5ff2d"/>
<rect x="1182.0" y="752.0" width="161.0" height="4" fill="#a5ff2d"/>
<rect x="1466.0" y="752.0" width="24.0" height="4" fill="#a5ff2d"/>
<rect x="429.0" y="736.0" width="23.0" height="4" fill="#5ad70a"/>
<rect x="575.0" y="736.0" width="156.0" height="4" fill="#5ad70a"/>
<rect x="991.0" y="736.0" width="112.0" height="4" fill="#5ad70a"/>
<rect x="1114.0" y="736.0" width="107.0" height="4" fill="#5ad70a"/>
<rect x="1261.0" y="736.0" width="28.0" height="4" fill="#5ad70a"/>
<rect x="1486.0" y="736.0" width="23.0" height="4" fill="#5ad70a"/>
<rect x="590.0" y="720.0" width="24.0" height="4" fill="#00f078"/>
<rect x="654.0" y="720.0" width="116.0" height="4" fill="#00f078"/>
<rect x="1070.0" y="720.0" width="170.0" height="4" fill="#00f078"/>
<rect x="1261.0" y="720.0" width="23.0" height="4" fill="#00f078"/>
<rect x="595.0" y="704.0" width="136.0" height="4" fill="#00e1f5"/>
<rect x="1089.0" y="704.0" width="29.0" height="4" fill="#00e1f5"/>
<rect x="1197.0" y="704.0" width="24.0" height="4" fill="#00e1f5"/>
<rect x="1270.0" y="704.0" width="53.0" height="4" fill="#00e1f5"/>
<rect x="1109.0" y="688.0" width="24.0" height="4" fill="#0014e0"/>
<g font-size="10.4" fill="#fff" text-anchor="middle">
<text x="116.9" y="830.3">KSE</text>
<text x="254.0" y="830.3">ETA</text>
<text x="494.0" y="830.3">NZC</text>
<text x="709.4" y="830.3">NDA</text>
<text x="851.4" y="830.3">SPE</text>
<text x="944.5" y="830.3">ARD</text>
<text x="1022.8" y="830.3">EGE</text>
<text x="1140.3" y="830.3">NTA</text>
<text x="1282.3" y="830.3">MON</text>
<text x="1346.0" y="830.3">URS</text>
<text x="1409.6" y="830.3">AHY</text>
<text x="1483.1" y="830.3">GUM</text>
<text x="1532.0" y="830.3">OHY</text>
<text x="1732.8" y="830.3">XHE</text>
<text x="1767.1" y="830.3">EVI</text>
<text x="175.7" y="814.3">AVB</text>
<text x="254.0" y="814.3">ELY</text>
<text x="327.5" y="814.3">CAM</text>
<text x="430.3" y="814.3">SSG</text>
<text x="582.1" y="814.3">PCA</text>
<text x="719.2" y="814.3">AUD</text>
<text x="807.4" y="814.3">AUR</text>
<text x="929.8" y="814.3">DSX</text>
<text x="1008.1" y="814.3">OCU</text>
<text x="1135.4" y="814.3">OER</text>
<text x="1252.9" y="814.3">DKD</text>
<text x="1301.9" y="814.3">DSV</text>
<text x="1350.9" y="814.3">ALY</text>
<text x="1404.7" y="814.3">JLE</text>
<text x="1468.4" y="814.3">SCC</text>
<text x="1556.5" y="814.3">FEV</text>
<text x="175.7" y="798.3">LYR</text>
<text x="371.6" y="798.3">JMC</text>
<text x="562.5" y="798.3">JPE</text>
<text x="670.2" y="798.3">PAU</text>
<text x="778.0" y="798.3">NIA</text>
<text x="1047.3" y="798.3">STA</text>
<text x="1204.0" y="798.3">NOO</text>
<text x="1350.9" y="798.3">COM</text>
<text x="1468.4" y="798.3">NCC</text>
<text x="1561.4" y="798.3">FED</text>
<text x="205.1" y="782.3">HVI</text>
<text x="415.6" y="782.3">ARI</text>
<text x="528.2" y="782.3">SZC</text>
<text x="621.3" y="782.3">CAP</text>
<text x="817.1" y="782.3">NUE</text>
<text x="964.0" y="782.3">OCT</text>
<text x="1057.1" y="782.3">ORI</text>
<text x="1184.4" y="782.3">AMO</text>
<text x="1252.9" y="782.3">DPC</text>
<text x="1326.4" y="782.3">XVI</text>
<text x="1404.7" y="782.3">QUA</text>
<text x="1556.5" y="782.3">AAN</text>
<text x="356.9" y="766.3">TAH</text>
<text x="430.3" y="766.3">JEA</text>
<text x="479.3" y="766.3">JIP</text>
<text x="538.0" y="766.3">PPS</text>
<text x="577.2" y="766.3">ZCS</text>
<text x="631.1" y="766.3">GDR</text>
<text x="973.8" y="766.3">DRA</text>
<text x="1071.8" y="766.3">LUM</text>
<text x="1110.9" y="766.3">RPU</text>
<text x="1174.6" y="766.3">THA</text>
<text x="1257.8" y="766.3">PSU</text>
<text x="1468.4" y="766.3">XCB</text>
<text x="430.3" y="750.3">JRC</text>
<text x="542.9" y="750.3">CAN</text>
<text x="577.2" y="750.3">FAN</text>
<text x="680.0" y="750.3">PER</text>
<text x="1052.2" y="750.3">CTA</text>
<text x="1262.7" y="750.3">HYD</text>
<text x="1478.2" y="750.3">XUM</text>
<text x="440.1" y="734.3">COR</text>
<text x="655.6" y="734.3">SDA</text>
<text x="1047.3" y="734.3">LMI</text>
<text x="1169.7" y="734.3">LEO</text>
<text x="1277.4" y="734.3">EHY</text>
<text x="1497.8" y="734.3">ECV</text>
<text x="601.7" y="718.3">JXA</text>
<text x="714.3" y="718.3">KCG</text>
<text x="1155.0" y="718.3">AND</text>
<text x="1272.5" y="718.3">DAD</text>
<text x="665.4" y="702.3">ERI</text>
<text x="1106.0" y="702.3">SLD</text>
<text x="1208.9" y="702.3">ORS</text>
<text x="1297.0" y="702.3">GEM</text>
<text x="1120.7" y="686.3">KUM</text>
</g>
<g stroke="#fff" stroke-width="2.08" fill="none">
<path d="M113.0,834.0 h8 M117.0,830.0 v8"/>
<path d="M240.7,834.0 h8 M244.7,830.0 v8"/>
<path d="M509.8,834.0 h8 M513.8,830.0 v8"/>
<path d="M705.8,834.0 h8 M709.8,830.0 v8"/>
<path d="M831.8,834.0 h8 M835.8,830.0 v8"/>
<path d="M959.8,834.0 h8 M963.8,830.0 v8"/>
<path d="M984.7,834.0 h8 M988.7,830.0 v8"/>
<path d="M1113.8,834.0 h8 M1117.8,830.0 v8"/>
<path d="M1292.8,834.0 h8 M1296.8,830.0 v8"/>
<path d="M1338.7,834.0 h8 M1342.7,830.0 v8"/>
<path d="M1409.8,834.0 h8 M1413.8,830.0 v8"/>
<path d="M1478.8,834.0 h8 M1482.8,830.0 v8"/>
<path d="M1527.8,834.0 h8 M1531.8,830.0 v8"/>
<path d="M1728.9,834.0 h8 M1732.9,830.0 v8"/>
<path d="M1762.8,834.0 h8 M1766.8,830.0 v8"/>
<path d="M171.8,818.0 h8 M175.8,814.0 v8"/>
<path d="M254.8,818.0 h8 M258.8,814.0 v8"/>
<path d="M323.0,818.0 h8 M327.0,814.0 v8"/>
<path d="M436.0,818.0 h8 M440.0,814.0 v8"/>
<path d="M598.0,818.0 h8 M602.0,814.0 v8"/>
<path d="M714.8,818.0 h8 M718.8,814.0 v8"/>
<path d="M791.7,818.0 h8 M795.7,814.0 v8"/>
<path d="M937.7,818.0 h8 M941.7,814.0 v8"/>
<path d="M1004.0,818.0 h8 M1008.0,814.0 v8"/>
<path d="M1150.7,818.0 h8 M1154.7,814.0 v8"/>
<path d="M1248.8,818.0 h8 M1252.8,814.0 v8"/>
<path d="M1297.7,818.0 h8 M1301.7,814.0 v8"/>
<path d="M1346.8,818.0 h8 M1350.8,814.0 v8"/>
<path d="M1400.8,818.0 h8 M1404.8,814.0 v8"/>
<path d="M1463.8,818.0 h8 M1467.8,814.0 v8"/>
<path d="M1551.8,818.0 h8 M1555.8,814.0 v8"/>
<path d="M173.8,802.0 h8 M177.8,798.0 v8"/>
<path d="M377.7,802.0 h8 M381.7,798.0 v8"/>
<path d="M543.8,802.0 h8 M547.8,798.0 v8"/>
<path d="M680.7,802.0 h8 M684.7,798.0 v8"/>
<path d="M739.8,802.0 h8 M743.8,798.0 v8"/>
<path d="M1072.7,802.0 h8 M1076.7,798.0 v8"/>
<path d="M1214.8,802.0 h8 M1218.8,798.0 v8"/>
<path d="M1302.8,802.0 h8 M1306.8,798.0 v8"/>
<path d="M1463.8,802.0 h8 M1467.8,798.0 v8"/>
<path d="M1556.8,802.0 h8 M1560.8,798.0 v8"/>
<path d="M200.8,786.0 h8 M204.8,782.0 v8"/>
<path d="M399.7,786.0 h8 M403.7,782.0 v8"/>
<path d="M523.8,786.0 h8 M527.8,782.0 v8"/>
<path d="M637.7,786.0 h8 M641.7,782.0 v8"/>
<path d="M812.8,786.0 h8 M816.8,782.0 v8"/>
<path d="M957.8,786.0 h8 M961.8,782.0 v8"/>
<path d="M1037.7,786.0 h8 M1041.7,782.0 v8"/>
<path d="M1184.8,786.0 h8 M1188.8,782.0 v8"/>
<path d="M1248.8,786.0 h8 M1252.8,782.0 v8"/>
<path d="M1321.8,786.0 h8 M1325.8,782.0 v8"/>
<path d="M1400.8,786.0 h8 M1404.8,782.0 v8"/>
<path d="M1542.8,786.0 h8 M1546.8,782.0 v8"/>
<path d="M354.8,770.0 h8 M358.8,766.0 v8"/>
<path d="M425.7,770.0 h8 M429.7,766.0 v8"/>
<path d="M475.7,770.0 h8 M479.7,766.0 v8"/>
<path d="M533.8,770.0 h8 M537.8,766.0 v8"/>
<path d="M569.8,770.0 h8 M573.8,766.0 v8"/>
<path d="M629.7,770.0 h8 M633.7,766.0 v8"/>
<path d="M971.8,770.0 h8 M975.8,766.0 v8"/>
<path d="M1067.7,770.0 h8 M1071.7,766.0 v8"/>
<path d="M1106.8,770.0 h8 M1110.8,766.0 v8"/>
<path d="M1175.0,770.0 h8 M1179.0,766.0 v8"/>
<path d="M1253.8,770.0 h8 M1257.8,766.0 v8"/>
<path d="M1463.8,770.0 h8 M1467.8,766.0 v8"/>
<path d="M426.8,754.0 h8 M430.8,750.0 v8"/>
<path d="M538.8,754.0 h8 M542.8,750.0 v8"/>
<path d="M572.7,754.0 h8 M576.7,750.0 v8"/>
<path d="M703.0,754.0 h8 M707.0,750.0 v8"/>
<path d="M1091.7,754.0 h8 M1095.7,750.0 v8"/>
<path d="M1268.0,754.0 h8 M1272.0,750.0 v8"/>
<path d="M1473.8,754.0 h8 M1477.8,750.0 v8"/>
<path d="M436.0,738.0 h8 M440.0,734.0 v8"/>
<path d="M629.7,738.0 h8 M633.7,734.0 v8"/>
<path d="M1036.8,738.0 h8 M1040.8,734.0 v8"/>
<path d="M1165.8,738.0 h8 M1169.8,734.0 v8"/>
<path d="M1273.0,738.0 h8 M1277.0,734.0 v8"/>
<path d="M1494.0,738.0 h8 M1498.0,734.0 v8"/>
<path d="M598.0,722.0 h8 M602.0,718.0 v8"/>
<path d="M724.8,722.0 h8 M728.8,718.0 v8"/>
<path d="M1184.8,722.0 h8 M1188.8,718.0 v8"/>
<path d="M1268.0,722.0 h8 M1272.0,718.0 v8"/>
<path d="M685.8,706.0 h8 M689.8,702.0 v8"/>
<path d="M1099.8,706.0 h8 M1103.8,702.0 v8"/>
<path d="M1204.8,706.0 h8 M1208.8,702.0 v8"/>
<path d="M1298.0,706.0 h8 M1302.0,702.0 v8"/>
<path d="M1117.0,690.0 h8 M1121.0,686.0 v8"/>
</g>
<rect x="19.5" y="637.7" width="1762.9" height="204.6" fill="none" stroke="#fff" stroke-width="1.1"/>
<g stroke="#fff" stroke-width="1.1">
<path d="M19.5,842.3 v4.9"/>
<path d="M264.3,842.3 v4.9"/>
<path d="M509.2,842.3 v4.9"/>
<path d="M754.0,842.3 v4.9"/>
<path d="M998.8,842.3 v4.9"/>
<path d="M1243.7,842.3 v4.9"/>
<path d="M1488.5,842.3 v4.9"/>
<path d="M1733.3,842.3 v4.9"/>
</g>
<g font-size="13.89" fill="#fff" text-anchor="middle" letter-spacing="1.1">
<text x="20.0" y="862.2">0</text>
<text x="264.8" y="862.2">50</text>
<text x="509.7" y="862.2">100</text>
<text x="754.5" y="862.2">150</text>
<text x="999.3" y="862.2">200</text>
<text x="1244.2" y="862.2">250</text>
<text x="1489.0" y="862.2">300</text>
<text x="1733.8" y="862.2">350</text>
</g>
<text x="900.3" y="882" font-size="13.89" fill="#fff" text-anchor="middle" textLength="146" lengthAdjust="spacing">Solar longitude (deg)</text>
</svg></body></html>
